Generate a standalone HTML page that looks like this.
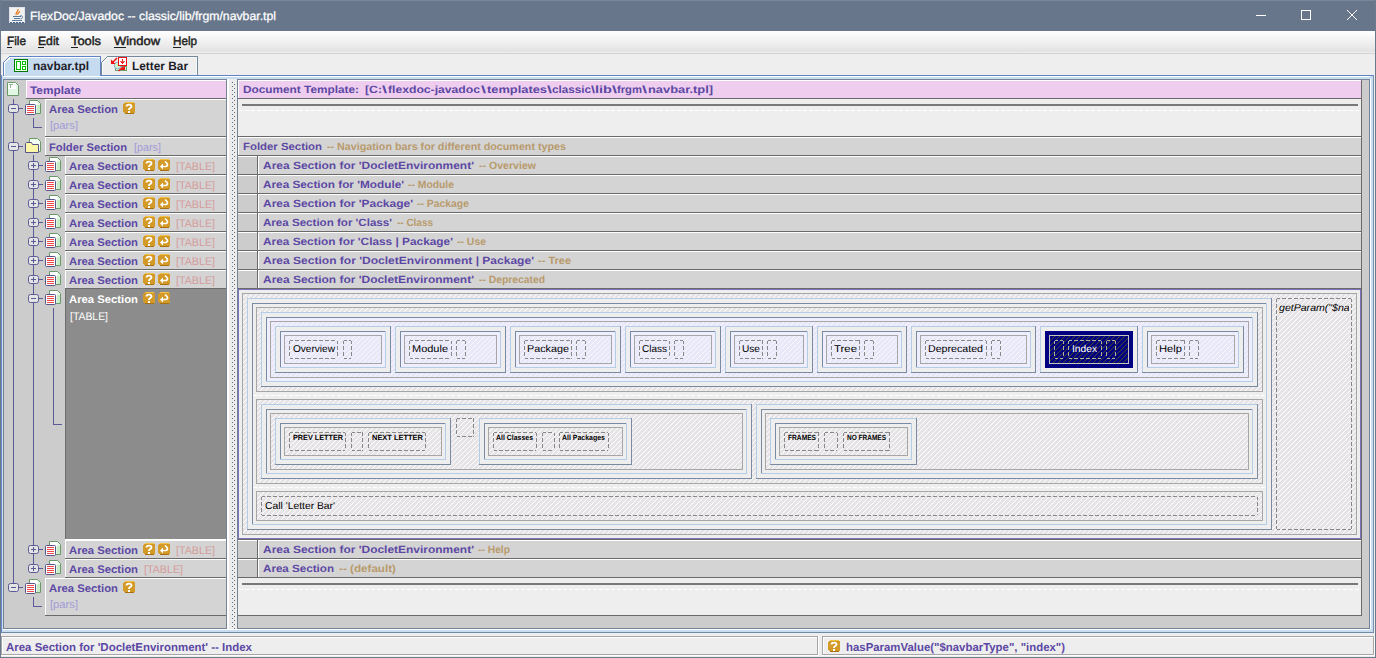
<!DOCTYPE html>
<html><head><meta charset="utf-8"><style>
html,body{margin:0;padding:0;width:1376px;height:658px;overflow:hidden;background:#eeeeee;}
svg{display:block;}
text{shape-rendering:auto;}
</style></head><body>
<svg width="1376" height="658" viewBox="0 0 1376 658" shape-rendering="crispEdges" text-rendering="geometricPrecision">
<rect x="0" y="0" width="1376" height="658" fill="#eeeeee"/>
<rect x="0" y="0" width="1376" height="31" fill="#67768a"/>
<rect x="0" y="0" width="1376" height="1" fill="#7b8798"/>
<rect x="0" y="0" width="1" height="658" fill="#6c7a8e"/>
<rect x="1375" y="0" width="1" height="658" fill="#6c7a8e"/>
<rect x="0" y="657" width="1376" height="1" fill="#6c7a8e"/>
<rect x="10" y="8" width="15" height="15" fill="#f2f2f2"/>
<rect x="9" y="7" width="16" height="1" fill="#dfe3e8"/>
<rect x="9" y="22" width="16" height="1" fill="#dfe3e8"/>
<rect x="9" y="7" width="1" height="16" fill="#dfe3e8"/>
<rect x="24" y="7" width="1" height="16" fill="#dfe3e8"/>
<rect x="10" y="22" width="2" height="1" fill="#4a6490"/>
<rect x="13" y="22" width="2" height="1" fill="#4a6490"/>
<rect x="16" y="22" width="2" height="1" fill="#4a6490"/>
<rect x="19" y="22" width="2" height="1" fill="#4a6490"/>
<rect x="22" y="22" width="2" height="1" fill="#4a6490"/>
<path d="M16.2 15 C15 12.5 18.5 12 18 9.2 M17.6 14.6 C17.4 12.8 20 12.6 19.6 11.2" stroke="#e87818" stroke-width="1.3" fill="none" shape-rendering="auto"/>
<rect x="13" y="16" width="8" height="1" fill="#58789a"/>
<rect x="14" y="18" width="6" height="1" fill="#58789a"/>
<rect x="12" y="20" width="10" height="1" fill="#58789a"/>
<path d="M20.5 15.5 C23.2 15.5 23.2 18.8 20.5 18.8" stroke="#58789a" stroke-width="1" fill="none" shape-rendering="auto"/>
<text x="30" y="20" font-size="12" fill="#ffffff" textLength="246" lengthAdjust="spacingAndGlyphs" font-family="Liberation Sans" stroke="#ffffff" stroke-width="0.25">FlexDoc/Javadoc -- classic/lib/frgm/navbar.tpl</text>
<rect x="1256" y="15" width="10" height="1" fill="#ffffff"/>
<rect x="1301" y="10" width="10" height="1" fill="#ffffff"/>
<rect x="1301" y="19" width="10" height="1" fill="#ffffff"/>
<rect x="1301" y="10" width="1" height="10" fill="#ffffff"/>
<rect x="1310" y="10" width="1" height="10" fill="#ffffff"/>
<path d="M1347 10 L1357 20 M1357 10 L1347 20" stroke="#ffffff" stroke-width="1.1"/>
<defs><linearGradient id="mg" x1="0" y1="0" x2="0" y2="1"><stop offset="0" stop-color="#ffffff"/><stop offset="1" stop-color="#e2e2e2"/></linearGradient><pattern id="hatch" patternUnits="userSpaceOnUse" width="5" height="5"><rect width="5" height="5" fill="#e6e4e6"/><rect x="4" y="1" width="1" height="1" fill="#fff"/><rect x="3" y="2" width="1" height="1" fill="#fff"/><rect x="2" y="3" width="1" height="1" fill="#fff"/><rect x="1" y="4" width="1" height="1" fill="#fff"/><rect x="0" y="0" width="1" height="1" fill="#fff"/></pattern><pattern id="lhatch" patternUnits="userSpaceOnUse" width="5" height="5"><rect width="5" height="5" fill="#e8e8f8"/><rect x="4" y="1" width="1" height="1" fill="#f8f8ff"/><rect x="3" y="2" width="1" height="1" fill="#f8f8ff"/><rect x="2" y="3" width="1" height="1" fill="#f8f8ff"/><rect x="1" y="4" width="1" height="1" fill="#f8f8ff"/><rect x="0" y="0" width="1" height="1" fill="#f8f8ff"/></pattern><pattern id="nhatch" patternUnits="userSpaceOnUse" width="5" height="5"><rect width="5" height="5" fill="#000080"/><rect x="4" y="1" width="1" height="1" fill="#48462e"/><rect x="3" y="2" width="1" height="1" fill="#48462e"/><rect x="2" y="3" width="1" height="1" fill="#48462e"/><rect x="1" y="4" width="1" height="1" fill="#48462e"/><rect x="0" y="0" width="1" height="1" fill="#48462e"/></pattern></defs>
<rect x="1" y="31" width="1374" height="21" fill="url(#mg)"/>
<rect x="1" y="53" width="1374" height="1" fill="#d2d2d2"/>
<text x="7" y="45" font-size="12" fill="#1e1e1e" textLength="19" lengthAdjust="spacingAndGlyphs" font-family="Liberation Sans" stroke="#1e1e1e" stroke-width="0.45">File</text>
<text x="38" y="45" font-size="12" fill="#1e1e1e" textLength="21" lengthAdjust="spacingAndGlyphs" font-family="Liberation Sans" stroke="#1e1e1e" stroke-width="0.45">Edit</text>
<text x="71" y="45" font-size="12" fill="#1e1e1e" textLength="30" lengthAdjust="spacingAndGlyphs" font-family="Liberation Sans" stroke="#1e1e1e" stroke-width="0.45">Tools</text>
<text x="114" y="45" font-size="12" fill="#1e1e1e" textLength="46" lengthAdjust="spacingAndGlyphs" font-family="Liberation Sans" stroke="#1e1e1e" stroke-width="0.45">Window</text>
<text x="173" y="45" font-size="12" fill="#1e1e1e" textLength="24" lengthAdjust="spacingAndGlyphs" font-family="Liberation Sans" stroke="#1e1e1e" stroke-width="0.45">Help</text>
<rect x="7" y="47" width="5" height="1" fill="#1e1e1e"/>
<rect x="38" y="47" width="6" height="1" fill="#1e1e1e"/>
<rect x="71" y="47" width="7" height="1" fill="#1e1e1e"/>
<rect x="114" y="47" width="12" height="1" fill="#1e1e1e"/>
<rect x="173" y="47" width="8" height="1" fill="#1e1e1e"/>
<path d="M3.5 75.5 V62.5 L9.5 56.5 H100.5 V75.5" fill="#c6daf0" stroke="#5f83c4" stroke-width="1"/>
<path d="M4.5 75 V63 L10 57.5 H99.5" fill="none" stroke="#ffffff" stroke-width="1"/>
<path d="M101.5 75 V62.5 L107.5 56.5 H197.5 V75" fill="#eeeeee" stroke="#74879b" stroke-width="1"/>
<path d="M102.5 75 V63 L108 57.5 H196.5 V75" fill="none" stroke="#f8f8f8" stroke-width="1"/>
<text x="33" y="70" font-size="12" fill="#1e1e2a" font-weight="bold" textLength="56" lengthAdjust="spacingAndGlyphs" font-family="Liberation Sans">navbar.tpl</text>
<text x="132" y="70" font-size="12" fill="#1e1e2a" font-weight="bold" textLength="56" lengthAdjust="spacingAndGlyphs" font-family="Liberation Sans">Letter Bar</text>
<rect x="14" y="59" width="14" height="1" fill="#007800"/>
<rect x="14" y="71" width="14" height="1" fill="#007800"/>
<rect x="14" y="59" width="1" height="13" fill="#007800"/>
<rect x="27" y="59" width="1" height="13" fill="#007800"/>
<rect x="15" y="60" width="12" height="11" fill="#f4fff4"/>
<rect x="16" y="61" width="5" height="1" fill="#00c000"/>
<rect x="16" y="69" width="5" height="1" fill="#00c000"/>
<rect x="16" y="61" width="1" height="9" fill="#00c000"/>
<rect x="20" y="61" width="1" height="9" fill="#00c000"/>
<rect x="17" y="62" width="3" height="7" fill="#e8ffe8"/>
<rect x="18" y="63" width="1" height="5" fill="#ffffff"/>
<rect x="22" y="61" width="4" height="1" fill="#00c000"/>
<rect x="22" y="64" width="4" height="1" fill="#00c000"/>
<rect x="22" y="61" width="1" height="4" fill="#00c000"/>
<rect x="25" y="61" width="1" height="4" fill="#00c000"/>
<rect x="23" y="62" width="2" height="2" fill="#ffffff"/>
<rect x="22" y="66" width="4" height="1" fill="#00c000"/>
<rect x="22" y="69" width="4" height="1" fill="#00c000"/>
<rect x="22" y="66" width="1" height="4" fill="#00c000"/>
<rect x="25" y="66" width="1" height="4" fill="#00c000"/>
<rect x="23" y="67" width="2" height="2" fill="#ffffff"/>
<rect x="115" y="66" width="12" height="5" fill="#d8f0d8"/>
<rect x="115" y="66" width="12" height="1" fill="#6aa06a"/>
<rect x="115" y="70" width="12" height="1" fill="#6aa06a"/>
<rect x="115" y="66" width="1" height="5" fill="#6aa06a"/>
<rect x="126" y="66" width="1" height="5" fill="#6aa06a"/>
<circle cx="117.5" cy="65.5" r="3.3" fill="#c8f8c8" stroke="#8890d0" stroke-width="0.8" shape-rendering="auto"/>
<rect x="118" y="57" width="9" height="9" fill="#ee1010"/>
<rect x="119" y="58" width="7" height="7" fill="#ffffff"/>
<rect x="122" y="59" width="1" height="5" fill="#ee1010"/>
<rect x="121" y="62" width="3" height="1" fill="#ee1010"/>
<rect x="120" y="61" width="5" height="1" fill="#f06060"/>
<path d="M117 58 L112.5 62.5" stroke="#ee1010" stroke-width="1.4" fill="none" shape-rendering="auto"/>
<path d="M111 59.5 V64 H115.5 Z" fill="#ee1010" shape-rendering="auto"/>
<path d="M118.5 71 L123 67" stroke="#ee1010" stroke-width="1.4" fill="none" shape-rendering="auto"/>
<path d="M125 65.5 V70 H120.5 Z" fill="#ee1010" shape-rendering="auto"/>
<rect x="100" y="75" width="1274" height="1" fill="#5f83c4"/>
<rect x="1" y="75" width="1" height="558" fill="#6a8cc8"/>
<rect x="1373" y="75" width="1" height="558" fill="#7a90aa"/>
<rect x="1" y="632" width="1373" height="1" fill="#7088a8"/>
<rect x="2" y="76" width="1371" height="1" fill="#ffffff"/>
<rect x="2" y="77" width="1371" height="2" fill="#c8dcf2"/>
<rect x="2" y="76" width="1" height="556" fill="#c8dcf2"/>
<rect x="1370" y="76" width="3" height="556" fill="#c8dcf2"/>
<rect x="1370" y="79" width="1" height="550" fill="#ffffff"/>
<rect x="2" y="629" width="1371" height="3" fill="#c8dcf2"/>
<rect x="3" y="629" width="1367" height="1" fill="#ffffff"/>
<rect x="3" y="79" width="1367" height="1" fill="#748494"/>
<rect x="3" y="628" width="1367" height="1" fill="#748494"/>
<rect x="3" y="79" width="1" height="550" fill="#748494"/>
<rect x="1369" y="79" width="1" height="550" fill="#748494"/>
<rect x="4" y="80" width="222" height="548" fill="#cccccc"/>
<rect x="226" y="79" width="1" height="550" fill="#748494"/>
<rect x="227" y="79" width="10" height="550" fill="#ececec"/>
<rect x="227" y="79" width="2" height="550" fill="#ffffff"/>
<path d="M232 82h1v1h-1z M234 84h1v1h-1z M232 86h1v1h-1z M234 88h1v1h-1z M232 90h1v1h-1z M234 92h1v1h-1z M232 94h1v1h-1z M234 96h1v1h-1z M232 98h1v1h-1z M234 100h1v1h-1z M232 102h1v1h-1z M234 104h1v1h-1z M232 106h1v1h-1z M234 108h1v1h-1z M232 110h1v1h-1z M234 112h1v1h-1z M232 114h1v1h-1z M234 116h1v1h-1z M232 118h1v1h-1z M234 120h1v1h-1z M232 122h1v1h-1z M234 124h1v1h-1z M232 126h1v1h-1z M234 128h1v1h-1z M232 130h1v1h-1z M234 132h1v1h-1z M232 134h1v1h-1z M234 136h1v1h-1z M232 138h1v1h-1z M234 140h1v1h-1z M232 142h1v1h-1z M234 144h1v1h-1z M232 146h1v1h-1z M234 148h1v1h-1z M232 150h1v1h-1z M234 152h1v1h-1z M232 154h1v1h-1z M234 156h1v1h-1z M232 158h1v1h-1z M234 160h1v1h-1z M232 162h1v1h-1z M234 164h1v1h-1z M232 166h1v1h-1z M234 168h1v1h-1z M232 170h1v1h-1z M234 172h1v1h-1z M232 174h1v1h-1z M234 176h1v1h-1z M232 178h1v1h-1z M234 180h1v1h-1z M232 182h1v1h-1z M234 184h1v1h-1z M232 186h1v1h-1z M234 188h1v1h-1z M232 190h1v1h-1z M234 192h1v1h-1z M232 194h1v1h-1z M234 196h1v1h-1z M232 198h1v1h-1z M234 200h1v1h-1z M232 202h1v1h-1z M234 204h1v1h-1z M232 206h1v1h-1z M234 208h1v1h-1z M232 210h1v1h-1z M234 212h1v1h-1z M232 214h1v1h-1z M234 216h1v1h-1z M232 218h1v1h-1z M234 220h1v1h-1z M232 222h1v1h-1z M234 224h1v1h-1z M232 226h1v1h-1z M234 228h1v1h-1z M232 230h1v1h-1z M234 232h1v1h-1z M232 234h1v1h-1z M234 236h1v1h-1z M232 238h1v1h-1z M234 240h1v1h-1z M232 242h1v1h-1z M234 244h1v1h-1z M232 246h1v1h-1z M234 248h1v1h-1z M232 250h1v1h-1z M234 252h1v1h-1z M232 254h1v1h-1z M234 256h1v1h-1z M232 258h1v1h-1z M234 260h1v1h-1z M232 262h1v1h-1z M234 264h1v1h-1z M232 266h1v1h-1z M234 268h1v1h-1z M232 270h1v1h-1z M234 272h1v1h-1z M232 274h1v1h-1z M234 276h1v1h-1z M232 278h1v1h-1z M234 280h1v1h-1z M232 282h1v1h-1z M234 284h1v1h-1z M232 286h1v1h-1z M234 288h1v1h-1z M232 290h1v1h-1z M234 292h1v1h-1z M232 294h1v1h-1z M234 296h1v1h-1z M232 298h1v1h-1z M234 300h1v1h-1z M232 302h1v1h-1z M234 304h1v1h-1z M232 306h1v1h-1z M234 308h1v1h-1z M232 310h1v1h-1z M234 312h1v1h-1z M232 314h1v1h-1z M234 316h1v1h-1z M232 318h1v1h-1z M234 320h1v1h-1z M232 322h1v1h-1z M234 324h1v1h-1z M232 326h1v1h-1z M234 328h1v1h-1z M232 330h1v1h-1z M234 332h1v1h-1z M232 334h1v1h-1z M234 336h1v1h-1z M232 338h1v1h-1z M234 340h1v1h-1z M232 342h1v1h-1z M234 344h1v1h-1z M232 346h1v1h-1z M234 348h1v1h-1z M232 350h1v1h-1z M234 352h1v1h-1z M232 354h1v1h-1z M234 356h1v1h-1z M232 358h1v1h-1z M234 360h1v1h-1z M232 362h1v1h-1z M234 364h1v1h-1z M232 366h1v1h-1z M234 368h1v1h-1z M232 370h1v1h-1z M234 372h1v1h-1z M232 374h1v1h-1z M234 376h1v1h-1z M232 378h1v1h-1z M234 380h1v1h-1z M232 382h1v1h-1z M234 384h1v1h-1z M232 386h1v1h-1z M234 388h1v1h-1z M232 390h1v1h-1z M234 392h1v1h-1z M232 394h1v1h-1z M234 396h1v1h-1z M232 398h1v1h-1z M234 400h1v1h-1z M232 402h1v1h-1z M234 404h1v1h-1z M232 406h1v1h-1z M234 408h1v1h-1z M232 410h1v1h-1z M234 412h1v1h-1z M232 414h1v1h-1z M234 416h1v1h-1z M232 418h1v1h-1z M234 420h1v1h-1z M232 422h1v1h-1z M234 424h1v1h-1z M232 426h1v1h-1z M234 428h1v1h-1z M232 430h1v1h-1z M234 432h1v1h-1z M232 434h1v1h-1z M234 436h1v1h-1z M232 438h1v1h-1z M234 440h1v1h-1z M232 442h1v1h-1z M234 444h1v1h-1z M232 446h1v1h-1z M234 448h1v1h-1z M232 450h1v1h-1z M234 452h1v1h-1z M232 454h1v1h-1z M234 456h1v1h-1z M232 458h1v1h-1z M234 460h1v1h-1z M232 462h1v1h-1z M234 464h1v1h-1z M232 466h1v1h-1z M234 468h1v1h-1z M232 470h1v1h-1z M234 472h1v1h-1z M232 474h1v1h-1z M234 476h1v1h-1z M232 478h1v1h-1z M234 480h1v1h-1z M232 482h1v1h-1z M234 484h1v1h-1z M232 486h1v1h-1z M234 488h1v1h-1z M232 490h1v1h-1z M234 492h1v1h-1z M232 494h1v1h-1z M234 496h1v1h-1z M232 498h1v1h-1z M234 500h1v1h-1z M232 502h1v1h-1z M234 504h1v1h-1z M232 506h1v1h-1z M234 508h1v1h-1z M232 510h1v1h-1z M234 512h1v1h-1z M232 514h1v1h-1z M234 516h1v1h-1z M232 518h1v1h-1z M234 520h1v1h-1z M232 522h1v1h-1z M234 524h1v1h-1z M232 526h1v1h-1z M234 528h1v1h-1z M232 530h1v1h-1z M234 532h1v1h-1z M232 534h1v1h-1z M234 536h1v1h-1z M232 538h1v1h-1z M234 540h1v1h-1z M232 542h1v1h-1z M234 544h1v1h-1z M232 546h1v1h-1z M234 548h1v1h-1z M232 550h1v1h-1z M234 552h1v1h-1z M232 554h1v1h-1z M234 556h1v1h-1z M232 558h1v1h-1z M234 560h1v1h-1z M232 562h1v1h-1z M234 564h1v1h-1z M232 566h1v1h-1z M234 568h1v1h-1z M232 570h1v1h-1z M234 572h1v1h-1z M232 574h1v1h-1z M234 576h1v1h-1z M232 578h1v1h-1z M234 580h1v1h-1z M232 582h1v1h-1z M234 584h1v1h-1z M232 586h1v1h-1z M234 588h1v1h-1z M232 590h1v1h-1z M234 592h1v1h-1z M232 594h1v1h-1z M234 596h1v1h-1z M232 598h1v1h-1z M234 600h1v1h-1z M232 602h1v1h-1z M234 604h1v1h-1z M232 606h1v1h-1z M234 608h1v1h-1z M232 610h1v1h-1z M234 612h1v1h-1z M232 614h1v1h-1z M234 616h1v1h-1z M232 618h1v1h-1z M234 620h1v1h-1z M232 622h1v1h-1z M234 624h1v1h-1z M232 626h1v1h-1z M234 628h1v1h-1z" fill="#5e6a7a"/>
<rect x="237" y="79" width="1" height="550" fill="#748494"/>
<rect x="238" y="80" width="1131" height="548" fill="#cccccc"/>
<rect x="13" y="99" width="1" height="484" fill="#5a5a96"/>
<rect x="33" y="155" width="1" height="418" fill="#5a5a96"/>
<rect x="53" y="308" width="1" height="117" fill="#5a5a96"/>
<rect x="53" y="424" width="9" height="1" fill="#5a5a96"/>
<rect x="33" y="118" width="1" height="10" fill="#5a5a96"/>
<rect x="33" y="127" width="9" height="1" fill="#5a5a96"/>
<rect x="33" y="597" width="1" height="10" fill="#5a5a96"/>
<rect x="33" y="606" width="9" height="1" fill="#5a5a96"/>
<rect x="26" y="80" width="200" height="19" fill="#eecdee"/>
<rect x="26" y="80" width="200" height="1" fill="#ffffff"/>
<rect x="26" y="80" width="1" height="19" fill="#ffffff"/>
<rect x="26" y="98" width="200" height="1" fill="#6a6a6a"/>
<path d="M7.5 82.5 H15.5 L18.5 85.5 V95.5 H7.5 Z" fill="#e4f6e4" stroke="#6a9a6a" stroke-width="1" shape-rendering="auto"/>
<rect x="8" y="83" width="8" height="6" fill="#ffffff"/>
<rect x="9" y="84" width="4" height="1" fill="#90b890"/>
<rect x="10" y="84" width="1" height="4" fill="#90b890"/>
<text x="30" y="94" font-size="11" fill="#5c48a4" font-weight="bold" textLength="51" lengthAdjust="spacingAndGlyphs" font-family="Liberation Sans">Template</text>
<rect x="45" y="99" width="181" height="38" fill="#d4d4d4"/>
<rect x="45" y="99" width="181" height="1" fill="#ffffff"/>
<rect x="45" y="99" width="1" height="38" fill="#ffffff"/>
<rect x="45" y="136" width="181" height="1" fill="#6a6a6a"/>
<rect x="8.5" y="104.5" width="10" height="8" rx="2" fill="#e4e4e4" stroke="#5a5a96" stroke-width="1" shape-rendering="auto"/>
<rect x="11" y="108" width="5" height="1" fill="#5a5a96"/>
<rect x="19" y="108" width="4" height="1" fill="#5a5a96"/>
<path d="M29.5 100.5 H37.5 L40.5 103.5 V113.5 H29.5 Z" fill="#e8f8e8" stroke="#6a9a6a" stroke-width="1" shape-rendering="auto"/>
<rect x="30" y="101" width="7" height="4" fill="#ffffff"/>
<rect x="37" y="105" width="3" height="8" fill="#c8ecc8"/>
<rect x="25.5" y="104.5" width="10" height="10" rx="1" fill="#ffffff" stroke="#55558a" stroke-width="1" shape-rendering="auto"/>
<rect x="27" y="106" width="7" height="1" fill="#f04848"/>
<rect x="27" y="108" width="7" height="1" fill="#f04848"/>
<rect x="27" y="110" width="7" height="1" fill="#f04848"/>
<rect x="27" y="112" width="7" height="1" fill="#f04848"/>
<text x="49" y="113" font-size="11" fill="#5c48a4" font-weight="bold" textLength="69" lengthAdjust="spacingAndGlyphs" font-family="Liberation Sans">Area Section</text>
<path d="M125 102 H133 L135 104 V112 L133 114 H125 L123 112 V104 Z" fill="#d49a28"/>
<path d="M125 102 H133 L134 103 H124 Z" fill="#f0c040"/>
<path d="M124 113 H134 L133 114 H125 Z" fill="#a87010"/>
<path d="M126.5 106.5 C126.5 104 131.5 104 131.5 106.5 C131.5 108 129 108 129 109.5 V110" stroke="#ffffff" stroke-width="1.8" fill="none" shape-rendering="auto"/>
<rect x="128" y="111" width="2" height="2" fill="#ffffff"/>
<text x="50" y="129" font-size="11" fill="#a29ad8" textLength="28" lengthAdjust="spacingAndGlyphs" font-family="Liberation Sans">[pars]</text>
<rect x="45" y="137" width="181" height="19" fill="#d4d4d4"/>
<rect x="45" y="137" width="181" height="1" fill="#ffffff"/>
<rect x="45" y="137" width="1" height="19" fill="#ffffff"/>
<rect x="45" y="155" width="181" height="1" fill="#6a6a6a"/>
<rect x="8.5" y="142.5" width="10" height="8" rx="2" fill="#e4e4e4" stroke="#5a5a96" stroke-width="1" shape-rendering="auto"/>
<rect x="11" y="146" width="5" height="1" fill="#5a5a96"/>
<rect x="19" y="146" width="4" height="1" fill="#5a5a96"/>
<path d="M29.5 138.5 H37.5 L40.5 141.5 V151.5 H29.5 Z" fill="#f4fff4" stroke="#6a9a6a" stroke-width="1" shape-rendering="auto"/>
<path d="M25.5 152.5 V143.5 L26.5 142.5 H31.5 L32.5 144.5 H38.5 V152.5 Z" fill="#fbf6a8" stroke="#55558a" stroke-width="1" shape-rendering="auto"/>
<text x="49" y="151" font-size="11" fill="#5c48a4" font-weight="bold" textLength="78" lengthAdjust="spacingAndGlyphs" font-family="Liberation Sans">Folder Section</text>
<text x="134" y="151" font-size="11" fill="#a29ad8" textLength="27" lengthAdjust="spacingAndGlyphs" font-family="Liberation Sans">[pars]</text>
<rect x="65" y="156" width="161" height="19" fill="#d4d4d4"/>
<rect x="65" y="156" width="161" height="1" fill="#ffffff"/>
<rect x="65" y="156" width="1" height="19" fill="#ffffff"/>
<rect x="65" y="174" width="161" height="1" fill="#6a6a6a"/>
<rect x="28.5" y="161.5" width="10" height="8" rx="2" fill="#e4e4e4" stroke="#5a5a96" stroke-width="1" shape-rendering="auto"/>
<rect x="31" y="165" width="5" height="1" fill="#5a5a96"/>
<rect x="33" y="163" width="1" height="5" fill="#5a5a96"/>
<rect x="39" y="165" width="4" height="1" fill="#5a5a96"/>
<path d="M49.5 157.5 H57.5 L60.5 160.5 V170.5 H49.5 Z" fill="#e8f8e8" stroke="#6a9a6a" stroke-width="1" shape-rendering="auto"/>
<rect x="50" y="158" width="7" height="4" fill="#ffffff"/>
<rect x="57" y="162" width="3" height="8" fill="#c8ecc8"/>
<rect x="45.5" y="161.5" width="10" height="10" rx="1" fill="#ffffff" stroke="#55558a" stroke-width="1" shape-rendering="auto"/>
<rect x="47" y="163" width="7" height="1" fill="#f04848"/>
<rect x="47" y="165" width="7" height="1" fill="#f04848"/>
<rect x="47" y="167" width="7" height="1" fill="#f04848"/>
<rect x="47" y="169" width="7" height="1" fill="#f04848"/>
<text x="69" y="170" font-size="11" fill="#5c48a4" font-weight="bold" textLength="69" lengthAdjust="spacingAndGlyphs" font-family="Liberation Sans">Area Section</text>
<path d="M145 159 H153 L155 161 V169 L153 171 H145 L143 169 V161 Z" fill="#d49a28"/>
<path d="M145 159 H153 L154 160 H144 Z" fill="#f0c040"/>
<path d="M144 170 H154 L153 171 H145 Z" fill="#a87010"/>
<path d="M146.5 163.5 C146.5 161 151.5 161 151.5 163.5 C151.5 165 149 165 149 166.5 V167" stroke="#ffffff" stroke-width="1.8" fill="none" shape-rendering="auto"/>
<rect x="148" y="168" width="2" height="2" fill="#ffffff"/>
<path d="M160 159 H168 L170 161 V169 L168 171 H160 L158 169 V161 Z" fill="#d49a28"/>
<path d="M160 159 H168 L169 160 H159 Z" fill="#f0c040"/>
<path d="M159 170 H169 L168 171 H160 Z" fill="#a87010"/>
<path d="M165 161.5 L167 163.5 C168 164.5 167.5 166.5 165.5 166.5 H161" stroke="#ffffff" stroke-width="1.7" fill="none" shape-rendering="auto"/>
<path d="M160 166.5 L163 163.5 V169.5 Z" fill="#ffffff" shape-rendering="auto"/>
<text x="176" y="170" font-size="11" fill="#d49c9c" textLength="39" lengthAdjust="spacingAndGlyphs" font-family="Liberation Sans">[TABLE]</text>
<rect x="65" y="175" width="161" height="19" fill="#d4d4d4"/>
<rect x="65" y="175" width="161" height="1" fill="#ffffff"/>
<rect x="65" y="175" width="1" height="19" fill="#ffffff"/>
<rect x="65" y="193" width="161" height="1" fill="#6a6a6a"/>
<rect x="28.5" y="180.5" width="10" height="8" rx="2" fill="#e4e4e4" stroke="#5a5a96" stroke-width="1" shape-rendering="auto"/>
<rect x="31" y="184" width="5" height="1" fill="#5a5a96"/>
<rect x="33" y="182" width="1" height="5" fill="#5a5a96"/>
<rect x="39" y="184" width="4" height="1" fill="#5a5a96"/>
<path d="M49.5 176.5 H57.5 L60.5 179.5 V189.5 H49.5 Z" fill="#e8f8e8" stroke="#6a9a6a" stroke-width="1" shape-rendering="auto"/>
<rect x="50" y="177" width="7" height="4" fill="#ffffff"/>
<rect x="57" y="181" width="3" height="8" fill="#c8ecc8"/>
<rect x="45.5" y="180.5" width="10" height="10" rx="1" fill="#ffffff" stroke="#55558a" stroke-width="1" shape-rendering="auto"/>
<rect x="47" y="182" width="7" height="1" fill="#f04848"/>
<rect x="47" y="184" width="7" height="1" fill="#f04848"/>
<rect x="47" y="186" width="7" height="1" fill="#f04848"/>
<rect x="47" y="188" width="7" height="1" fill="#f04848"/>
<text x="69" y="189" font-size="11" fill="#5c48a4" font-weight="bold" textLength="69" lengthAdjust="spacingAndGlyphs" font-family="Liberation Sans">Area Section</text>
<path d="M145 178 H153 L155 180 V188 L153 190 H145 L143 188 V180 Z" fill="#d49a28"/>
<path d="M145 178 H153 L154 179 H144 Z" fill="#f0c040"/>
<path d="M144 189 H154 L153 190 H145 Z" fill="#a87010"/>
<path d="M146.5 182.5 C146.5 180 151.5 180 151.5 182.5 C151.5 184 149 184 149 185.5 V186" stroke="#ffffff" stroke-width="1.8" fill="none" shape-rendering="auto"/>
<rect x="148" y="187" width="2" height="2" fill="#ffffff"/>
<path d="M160 178 H168 L170 180 V188 L168 190 H160 L158 188 V180 Z" fill="#d49a28"/>
<path d="M160 178 H168 L169 179 H159 Z" fill="#f0c040"/>
<path d="M159 189 H169 L168 190 H160 Z" fill="#a87010"/>
<path d="M165 180.5 L167 182.5 C168 183.5 167.5 185.5 165.5 185.5 H161" stroke="#ffffff" stroke-width="1.7" fill="none" shape-rendering="auto"/>
<path d="M160 185.5 L163 182.5 V188.5 Z" fill="#ffffff" shape-rendering="auto"/>
<text x="176" y="189" font-size="11" fill="#d49c9c" textLength="39" lengthAdjust="spacingAndGlyphs" font-family="Liberation Sans">[TABLE]</text>
<rect x="65" y="194" width="161" height="19" fill="#d4d4d4"/>
<rect x="65" y="194" width="161" height="1" fill="#ffffff"/>
<rect x="65" y="194" width="1" height="19" fill="#ffffff"/>
<rect x="65" y="212" width="161" height="1" fill="#6a6a6a"/>
<rect x="28.5" y="199.5" width="10" height="8" rx="2" fill="#e4e4e4" stroke="#5a5a96" stroke-width="1" shape-rendering="auto"/>
<rect x="31" y="203" width="5" height="1" fill="#5a5a96"/>
<rect x="33" y="201" width="1" height="5" fill="#5a5a96"/>
<rect x="39" y="203" width="4" height="1" fill="#5a5a96"/>
<path d="M49.5 195.5 H57.5 L60.5 198.5 V208.5 H49.5 Z" fill="#e8f8e8" stroke="#6a9a6a" stroke-width="1" shape-rendering="auto"/>
<rect x="50" y="196" width="7" height="4" fill="#ffffff"/>
<rect x="57" y="200" width="3" height="8" fill="#c8ecc8"/>
<rect x="45.5" y="199.5" width="10" height="10" rx="1" fill="#ffffff" stroke="#55558a" stroke-width="1" shape-rendering="auto"/>
<rect x="47" y="201" width="7" height="1" fill="#f04848"/>
<rect x="47" y="203" width="7" height="1" fill="#f04848"/>
<rect x="47" y="205" width="7" height="1" fill="#f04848"/>
<rect x="47" y="207" width="7" height="1" fill="#f04848"/>
<text x="69" y="208" font-size="11" fill="#5c48a4" font-weight="bold" textLength="69" lengthAdjust="spacingAndGlyphs" font-family="Liberation Sans">Area Section</text>
<path d="M145 197 H153 L155 199 V207 L153 209 H145 L143 207 V199 Z" fill="#d49a28"/>
<path d="M145 197 H153 L154 198 H144 Z" fill="#f0c040"/>
<path d="M144 208 H154 L153 209 H145 Z" fill="#a87010"/>
<path d="M146.5 201.5 C146.5 199 151.5 199 151.5 201.5 C151.5 203 149 203 149 204.5 V205" stroke="#ffffff" stroke-width="1.8" fill="none" shape-rendering="auto"/>
<rect x="148" y="206" width="2" height="2" fill="#ffffff"/>
<path d="M160 197 H168 L170 199 V207 L168 209 H160 L158 207 V199 Z" fill="#d49a28"/>
<path d="M160 197 H168 L169 198 H159 Z" fill="#f0c040"/>
<path d="M159 208 H169 L168 209 H160 Z" fill="#a87010"/>
<path d="M165 199.5 L167 201.5 C168 202.5 167.5 204.5 165.5 204.5 H161" stroke="#ffffff" stroke-width="1.7" fill="none" shape-rendering="auto"/>
<path d="M160 204.5 L163 201.5 V207.5 Z" fill="#ffffff" shape-rendering="auto"/>
<text x="176" y="208" font-size="11" fill="#d49c9c" textLength="39" lengthAdjust="spacingAndGlyphs" font-family="Liberation Sans">[TABLE]</text>
<rect x="65" y="213" width="161" height="19" fill="#d4d4d4"/>
<rect x="65" y="213" width="161" height="1" fill="#ffffff"/>
<rect x="65" y="213" width="1" height="19" fill="#ffffff"/>
<rect x="65" y="231" width="161" height="1" fill="#6a6a6a"/>
<rect x="28.5" y="218.5" width="10" height="8" rx="2" fill="#e4e4e4" stroke="#5a5a96" stroke-width="1" shape-rendering="auto"/>
<rect x="31" y="222" width="5" height="1" fill="#5a5a96"/>
<rect x="33" y="220" width="1" height="5" fill="#5a5a96"/>
<rect x="39" y="222" width="4" height="1" fill="#5a5a96"/>
<path d="M49.5 214.5 H57.5 L60.5 217.5 V227.5 H49.5 Z" fill="#e8f8e8" stroke="#6a9a6a" stroke-width="1" shape-rendering="auto"/>
<rect x="50" y="215" width="7" height="4" fill="#ffffff"/>
<rect x="57" y="219" width="3" height="8" fill="#c8ecc8"/>
<rect x="45.5" y="218.5" width="10" height="10" rx="1" fill="#ffffff" stroke="#55558a" stroke-width="1" shape-rendering="auto"/>
<rect x="47" y="220" width="7" height="1" fill="#f04848"/>
<rect x="47" y="222" width="7" height="1" fill="#f04848"/>
<rect x="47" y="224" width="7" height="1" fill="#f04848"/>
<rect x="47" y="226" width="7" height="1" fill="#f04848"/>
<text x="69" y="227" font-size="11" fill="#5c48a4" font-weight="bold" textLength="69" lengthAdjust="spacingAndGlyphs" font-family="Liberation Sans">Area Section</text>
<path d="M145 216 H153 L155 218 V226 L153 228 H145 L143 226 V218 Z" fill="#d49a28"/>
<path d="M145 216 H153 L154 217 H144 Z" fill="#f0c040"/>
<path d="M144 227 H154 L153 228 H145 Z" fill="#a87010"/>
<path d="M146.5 220.5 C146.5 218 151.5 218 151.5 220.5 C151.5 222 149 222 149 223.5 V224" stroke="#ffffff" stroke-width="1.8" fill="none" shape-rendering="auto"/>
<rect x="148" y="225" width="2" height="2" fill="#ffffff"/>
<path d="M160 216 H168 L170 218 V226 L168 228 H160 L158 226 V218 Z" fill="#d49a28"/>
<path d="M160 216 H168 L169 217 H159 Z" fill="#f0c040"/>
<path d="M159 227 H169 L168 228 H160 Z" fill="#a87010"/>
<path d="M165 218.5 L167 220.5 C168 221.5 167.5 223.5 165.5 223.5 H161" stroke="#ffffff" stroke-width="1.7" fill="none" shape-rendering="auto"/>
<path d="M160 223.5 L163 220.5 V226.5 Z" fill="#ffffff" shape-rendering="auto"/>
<text x="176" y="227" font-size="11" fill="#d49c9c" textLength="39" lengthAdjust="spacingAndGlyphs" font-family="Liberation Sans">[TABLE]</text>
<rect x="65" y="232" width="161" height="19" fill="#d4d4d4"/>
<rect x="65" y="232" width="161" height="1" fill="#ffffff"/>
<rect x="65" y="232" width="1" height="19" fill="#ffffff"/>
<rect x="65" y="250" width="161" height="1" fill="#6a6a6a"/>
<rect x="28.5" y="237.5" width="10" height="8" rx="2" fill="#e4e4e4" stroke="#5a5a96" stroke-width="1" shape-rendering="auto"/>
<rect x="31" y="241" width="5" height="1" fill="#5a5a96"/>
<rect x="33" y="239" width="1" height="5" fill="#5a5a96"/>
<rect x="39" y="241" width="4" height="1" fill="#5a5a96"/>
<path d="M49.5 233.5 H57.5 L60.5 236.5 V246.5 H49.5 Z" fill="#e8f8e8" stroke="#6a9a6a" stroke-width="1" shape-rendering="auto"/>
<rect x="50" y="234" width="7" height="4" fill="#ffffff"/>
<rect x="57" y="238" width="3" height="8" fill="#c8ecc8"/>
<rect x="45.5" y="237.5" width="10" height="10" rx="1" fill="#ffffff" stroke="#55558a" stroke-width="1" shape-rendering="auto"/>
<rect x="47" y="239" width="7" height="1" fill="#f04848"/>
<rect x="47" y="241" width="7" height="1" fill="#f04848"/>
<rect x="47" y="243" width="7" height="1" fill="#f04848"/>
<rect x="47" y="245" width="7" height="1" fill="#f04848"/>
<text x="69" y="246" font-size="11" fill="#5c48a4" font-weight="bold" textLength="69" lengthAdjust="spacingAndGlyphs" font-family="Liberation Sans">Area Section</text>
<path d="M145 235 H153 L155 237 V245 L153 247 H145 L143 245 V237 Z" fill="#d49a28"/>
<path d="M145 235 H153 L154 236 H144 Z" fill="#f0c040"/>
<path d="M144 246 H154 L153 247 H145 Z" fill="#a87010"/>
<path d="M146.5 239.5 C146.5 237 151.5 237 151.5 239.5 C151.5 241 149 241 149 242.5 V243" stroke="#ffffff" stroke-width="1.8" fill="none" shape-rendering="auto"/>
<rect x="148" y="244" width="2" height="2" fill="#ffffff"/>
<path d="M160 235 H168 L170 237 V245 L168 247 H160 L158 245 V237 Z" fill="#d49a28"/>
<path d="M160 235 H168 L169 236 H159 Z" fill="#f0c040"/>
<path d="M159 246 H169 L168 247 H160 Z" fill="#a87010"/>
<path d="M165 237.5 L167 239.5 C168 240.5 167.5 242.5 165.5 242.5 H161" stroke="#ffffff" stroke-width="1.7" fill="none" shape-rendering="auto"/>
<path d="M160 242.5 L163 239.5 V245.5 Z" fill="#ffffff" shape-rendering="auto"/>
<text x="176" y="246" font-size="11" fill="#d49c9c" textLength="39" lengthAdjust="spacingAndGlyphs" font-family="Liberation Sans">[TABLE]</text>
<rect x="65" y="251" width="161" height="19" fill="#d4d4d4"/>
<rect x="65" y="251" width="161" height="1" fill="#ffffff"/>
<rect x="65" y="251" width="1" height="19" fill="#ffffff"/>
<rect x="65" y="269" width="161" height="1" fill="#6a6a6a"/>
<rect x="28.5" y="256.5" width="10" height="8" rx="2" fill="#e4e4e4" stroke="#5a5a96" stroke-width="1" shape-rendering="auto"/>
<rect x="31" y="260" width="5" height="1" fill="#5a5a96"/>
<rect x="33" y="258" width="1" height="5" fill="#5a5a96"/>
<rect x="39" y="260" width="4" height="1" fill="#5a5a96"/>
<path d="M49.5 252.5 H57.5 L60.5 255.5 V265.5 H49.5 Z" fill="#e8f8e8" stroke="#6a9a6a" stroke-width="1" shape-rendering="auto"/>
<rect x="50" y="253" width="7" height="4" fill="#ffffff"/>
<rect x="57" y="257" width="3" height="8" fill="#c8ecc8"/>
<rect x="45.5" y="256.5" width="10" height="10" rx="1" fill="#ffffff" stroke="#55558a" stroke-width="1" shape-rendering="auto"/>
<rect x="47" y="258" width="7" height="1" fill="#f04848"/>
<rect x="47" y="260" width="7" height="1" fill="#f04848"/>
<rect x="47" y="262" width="7" height="1" fill="#f04848"/>
<rect x="47" y="264" width="7" height="1" fill="#f04848"/>
<text x="69" y="265" font-size="11" fill="#5c48a4" font-weight="bold" textLength="69" lengthAdjust="spacingAndGlyphs" font-family="Liberation Sans">Area Section</text>
<path d="M145 254 H153 L155 256 V264 L153 266 H145 L143 264 V256 Z" fill="#d49a28"/>
<path d="M145 254 H153 L154 255 H144 Z" fill="#f0c040"/>
<path d="M144 265 H154 L153 266 H145 Z" fill="#a87010"/>
<path d="M146.5 258.5 C146.5 256 151.5 256 151.5 258.5 C151.5 260 149 260 149 261.5 V262" stroke="#ffffff" stroke-width="1.8" fill="none" shape-rendering="auto"/>
<rect x="148" y="263" width="2" height="2" fill="#ffffff"/>
<path d="M160 254 H168 L170 256 V264 L168 266 H160 L158 264 V256 Z" fill="#d49a28"/>
<path d="M160 254 H168 L169 255 H159 Z" fill="#f0c040"/>
<path d="M159 265 H169 L168 266 H160 Z" fill="#a87010"/>
<path d="M165 256.5 L167 258.5 C168 259.5 167.5 261.5 165.5 261.5 H161" stroke="#ffffff" stroke-width="1.7" fill="none" shape-rendering="auto"/>
<path d="M160 261.5 L163 258.5 V264.5 Z" fill="#ffffff" shape-rendering="auto"/>
<text x="176" y="265" font-size="11" fill="#d49c9c" textLength="39" lengthAdjust="spacingAndGlyphs" font-family="Liberation Sans">[TABLE]</text>
<rect x="65" y="270" width="161" height="19" fill="#d4d4d4"/>
<rect x="65" y="270" width="161" height="1" fill="#ffffff"/>
<rect x="65" y="270" width="1" height="19" fill="#ffffff"/>
<rect x="65" y="288" width="161" height="1" fill="#6a6a6a"/>
<rect x="28.5" y="275.5" width="10" height="8" rx="2" fill="#e4e4e4" stroke="#5a5a96" stroke-width="1" shape-rendering="auto"/>
<rect x="31" y="279" width="5" height="1" fill="#5a5a96"/>
<rect x="33" y="277" width="1" height="5" fill="#5a5a96"/>
<rect x="39" y="279" width="4" height="1" fill="#5a5a96"/>
<path d="M49.5 271.5 H57.5 L60.5 274.5 V284.5 H49.5 Z" fill="#e8f8e8" stroke="#6a9a6a" stroke-width="1" shape-rendering="auto"/>
<rect x="50" y="272" width="7" height="4" fill="#ffffff"/>
<rect x="57" y="276" width="3" height="8" fill="#c8ecc8"/>
<rect x="45.5" y="275.5" width="10" height="10" rx="1" fill="#ffffff" stroke="#55558a" stroke-width="1" shape-rendering="auto"/>
<rect x="47" y="277" width="7" height="1" fill="#f04848"/>
<rect x="47" y="279" width="7" height="1" fill="#f04848"/>
<rect x="47" y="281" width="7" height="1" fill="#f04848"/>
<rect x="47" y="283" width="7" height="1" fill="#f04848"/>
<text x="69" y="284" font-size="11" fill="#5c48a4" font-weight="bold" textLength="69" lengthAdjust="spacingAndGlyphs" font-family="Liberation Sans">Area Section</text>
<path d="M145 273 H153 L155 275 V283 L153 285 H145 L143 283 V275 Z" fill="#d49a28"/>
<path d="M145 273 H153 L154 274 H144 Z" fill="#f0c040"/>
<path d="M144 284 H154 L153 285 H145 Z" fill="#a87010"/>
<path d="M146.5 277.5 C146.5 275 151.5 275 151.5 277.5 C151.5 279 149 279 149 280.5 V281" stroke="#ffffff" stroke-width="1.8" fill="none" shape-rendering="auto"/>
<rect x="148" y="282" width="2" height="2" fill="#ffffff"/>
<path d="M160 273 H168 L170 275 V283 L168 285 H160 L158 283 V275 Z" fill="#d49a28"/>
<path d="M160 273 H168 L169 274 H159 Z" fill="#f0c040"/>
<path d="M159 284 H169 L168 285 H160 Z" fill="#a87010"/>
<path d="M165 275.5 L167 277.5 C168 278.5 167.5 280.5 165.5 280.5 H161" stroke="#ffffff" stroke-width="1.7" fill="none" shape-rendering="auto"/>
<path d="M160 280.5 L163 277.5 V283.5 Z" fill="#ffffff" shape-rendering="auto"/>
<text x="176" y="284" font-size="11" fill="#d49c9c" textLength="39" lengthAdjust="spacingAndGlyphs" font-family="Liberation Sans">[TABLE]</text>
<rect x="65" y="289" width="161" height="250" fill="#8c8c8c"/>
<rect x="65" y="289" width="1" height="250" fill="#6e6e6e"/>
<rect x="28.5" y="294.5" width="10" height="8" rx="2" fill="#e4e4e4" stroke="#5a5a96" stroke-width="1" shape-rendering="auto"/>
<rect x="31" y="298" width="5" height="1" fill="#5a5a96"/>
<rect x="39" y="298" width="4" height="1" fill="#5a5a96"/>
<path d="M49.5 290.5 H57.5 L60.5 293.5 V303.5 H49.5 Z" fill="#e8f8e8" stroke="#6a9a6a" stroke-width="1" shape-rendering="auto"/>
<rect x="50" y="291" width="7" height="4" fill="#ffffff"/>
<rect x="57" y="295" width="3" height="8" fill="#c8ecc8"/>
<rect x="45.5" y="294.5" width="10" height="10" rx="1" fill="#ffffff" stroke="#55558a" stroke-width="1" shape-rendering="auto"/>
<rect x="47" y="296" width="7" height="1" fill="#f04848"/>
<rect x="47" y="298" width="7" height="1" fill="#f04848"/>
<rect x="47" y="300" width="7" height="1" fill="#f04848"/>
<rect x="47" y="302" width="7" height="1" fill="#f04848"/>
<text x="69" y="303" font-size="11" fill="#ffffff" font-weight="bold" textLength="69" lengthAdjust="spacingAndGlyphs" font-family="Liberation Sans">Area Section</text>
<path d="M145 292 H153 L155 294 V302 L153 304 H145 L143 302 V294 Z" fill="#d49a28"/>
<path d="M145 292 H153 L154 293 H144 Z" fill="#f0c040"/>
<path d="M144 303 H154 L153 304 H145 Z" fill="#a87010"/>
<path d="M146.5 296.5 C146.5 294 151.5 294 151.5 296.5 C151.5 298 149 298 149 299.5 V300" stroke="#ffffff" stroke-width="1.8" fill="none" shape-rendering="auto"/>
<rect x="148" y="301" width="2" height="2" fill="#ffffff"/>
<path d="M160 292 H168 L170 294 V302 L168 304 H160 L158 302 V294 Z" fill="#d49a28"/>
<path d="M160 292 H168 L169 293 H159 Z" fill="#f0c040"/>
<path d="M159 303 H169 L168 304 H160 Z" fill="#a87010"/>
<path d="M165 294.5 L167 296.5 C168 297.5 167.5 299.5 165.5 299.5 H161" stroke="#ffffff" stroke-width="1.7" fill="none" shape-rendering="auto"/>
<path d="M160 299.5 L163 296.5 V302.5 Z" fill="#ffffff" shape-rendering="auto"/>
<text x="70" y="320" font-size="11" fill="#ffffff" textLength="38" lengthAdjust="spacingAndGlyphs" font-family="Liberation Sans">[TABLE]</text>
<rect x="65" y="539" width="161" height="20" fill="#d4d4d4"/>
<rect x="65" y="539" width="161" height="1" fill="#ffffff"/>
<rect x="65" y="539" width="1" height="20" fill="#ffffff"/>
<rect x="65" y="558" width="161" height="1" fill="#6a6a6a"/>
<rect x="65" y="540" width="161" height="1" fill="#ffffff"/>
<rect x="28.5" y="545.5" width="10" height="8" rx="2" fill="#e4e4e4" stroke="#5a5a96" stroke-width="1" shape-rendering="auto"/>
<rect x="31" y="549" width="5" height="1" fill="#5a5a96"/>
<rect x="33" y="547" width="1" height="5" fill="#5a5a96"/>
<rect x="39" y="549" width="4" height="1" fill="#5a5a96"/>
<path d="M49.5 541.5 H57.5 L60.5 544.5 V554.5 H49.5 Z" fill="#e8f8e8" stroke="#6a9a6a" stroke-width="1" shape-rendering="auto"/>
<rect x="50" y="542" width="7" height="4" fill="#ffffff"/>
<rect x="57" y="546" width="3" height="8" fill="#c8ecc8"/>
<rect x="45.5" y="545.5" width="10" height="10" rx="1" fill="#ffffff" stroke="#55558a" stroke-width="1" shape-rendering="auto"/>
<rect x="47" y="547" width="7" height="1" fill="#f04848"/>
<rect x="47" y="549" width="7" height="1" fill="#f04848"/>
<rect x="47" y="551" width="7" height="1" fill="#f04848"/>
<rect x="47" y="553" width="7" height="1" fill="#f04848"/>
<text x="69" y="554" font-size="11" fill="#5c48a4" font-weight="bold" textLength="69" lengthAdjust="spacingAndGlyphs" font-family="Liberation Sans">Area Section</text>
<path d="M145 543 H153 L155 545 V553 L153 555 H145 L143 553 V545 Z" fill="#d49a28"/>
<path d="M145 543 H153 L154 544 H144 Z" fill="#f0c040"/>
<path d="M144 554 H154 L153 555 H145 Z" fill="#a87010"/>
<path d="M146.5 547.5 C146.5 545 151.5 545 151.5 547.5 C151.5 549 149 549 149 550.5 V551" stroke="#ffffff" stroke-width="1.8" fill="none" shape-rendering="auto"/>
<rect x="148" y="552" width="2" height="2" fill="#ffffff"/>
<path d="M160 543 H168 L170 545 V553 L168 555 H160 L158 553 V545 Z" fill="#d49a28"/>
<path d="M160 543 H168 L169 544 H159 Z" fill="#f0c040"/>
<path d="M159 554 H169 L168 555 H160 Z" fill="#a87010"/>
<path d="M165 545.5 L167 547.5 C168 548.5 167.5 550.5 165.5 550.5 H161" stroke="#ffffff" stroke-width="1.7" fill="none" shape-rendering="auto"/>
<path d="M160 550.5 L163 547.5 V553.5 Z" fill="#ffffff" shape-rendering="auto"/>
<text x="176" y="554" font-size="11" fill="#d49c9c" textLength="39" lengthAdjust="spacingAndGlyphs" font-family="Liberation Sans">[TABLE]</text>
<rect x="65" y="559" width="161" height="19" fill="#d4d4d4"/>
<rect x="65" y="559" width="161" height="1" fill="#ffffff"/>
<rect x="65" y="559" width="1" height="19" fill="#ffffff"/>
<rect x="65" y="577" width="161" height="1" fill="#6a6a6a"/>
<rect x="28.5" y="564.5" width="10" height="8" rx="2" fill="#e4e4e4" stroke="#5a5a96" stroke-width="1" shape-rendering="auto"/>
<rect x="31" y="568" width="5" height="1" fill="#5a5a96"/>
<rect x="33" y="566" width="1" height="5" fill="#5a5a96"/>
<rect x="39" y="568" width="4" height="1" fill="#5a5a96"/>
<path d="M49.5 560.5 H57.5 L60.5 563.5 V573.5 H49.5 Z" fill="#e8f8e8" stroke="#6a9a6a" stroke-width="1" shape-rendering="auto"/>
<rect x="50" y="561" width="7" height="4" fill="#ffffff"/>
<rect x="57" y="565" width="3" height="8" fill="#c8ecc8"/>
<rect x="45.5" y="564.5" width="10" height="10" rx="1" fill="#ffffff" stroke="#55558a" stroke-width="1" shape-rendering="auto"/>
<rect x="47" y="566" width="7" height="1" fill="#f04848"/>
<rect x="47" y="568" width="7" height="1" fill="#f04848"/>
<rect x="47" y="570" width="7" height="1" fill="#f04848"/>
<rect x="47" y="572" width="7" height="1" fill="#f04848"/>
<text x="69" y="573" font-size="11" fill="#5c48a4" font-weight="bold" textLength="69" lengthAdjust="spacingAndGlyphs" font-family="Liberation Sans">Area Section</text>
<text x="144" y="573" font-size="11" fill="#d49c9c" textLength="39" lengthAdjust="spacingAndGlyphs" font-family="Liberation Sans">[TABLE]</text>
<rect x="45" y="578" width="181" height="38" fill="#d4d4d4"/>
<rect x="45" y="578" width="181" height="1" fill="#ffffff"/>
<rect x="45" y="578" width="1" height="38" fill="#ffffff"/>
<rect x="45" y="615" width="181" height="1" fill="#6a6a6a"/>
<rect x="8.5" y="583.5" width="10" height="8" rx="2" fill="#e4e4e4" stroke="#5a5a96" stroke-width="1" shape-rendering="auto"/>
<rect x="11" y="587" width="5" height="1" fill="#5a5a96"/>
<rect x="19" y="587" width="4" height="1" fill="#5a5a96"/>
<path d="M29.5 579.5 H37.5 L40.5 582.5 V592.5 H29.5 Z" fill="#e8f8e8" stroke="#6a9a6a" stroke-width="1" shape-rendering="auto"/>
<rect x="30" y="580" width="7" height="4" fill="#ffffff"/>
<rect x="37" y="584" width="3" height="8" fill="#c8ecc8"/>
<rect x="25.5" y="583.5" width="10" height="10" rx="1" fill="#ffffff" stroke="#55558a" stroke-width="1" shape-rendering="auto"/>
<rect x="27" y="585" width="7" height="1" fill="#f04848"/>
<rect x="27" y="587" width="7" height="1" fill="#f04848"/>
<rect x="27" y="589" width="7" height="1" fill="#f04848"/>
<rect x="27" y="591" width="7" height="1" fill="#f04848"/>
<text x="49" y="592" font-size="11" fill="#5c48a4" font-weight="bold" textLength="69" lengthAdjust="spacingAndGlyphs" font-family="Liberation Sans">Area Section</text>
<path d="M125 581 H133 L135 583 V591 L133 593 H125 L123 591 V583 Z" fill="#d49a28"/>
<path d="M125 581 H133 L134 582 H124 Z" fill="#f0c040"/>
<path d="M124 592 H134 L133 593 H125 Z" fill="#a87010"/>
<path d="M126.5 585.5 C126.5 583 131.5 583 131.5 585.5 C131.5 587 129 587 129 588.5 V589" stroke="#ffffff" stroke-width="1.8" fill="none" shape-rendering="auto"/>
<rect x="128" y="590" width="2" height="2" fill="#ffffff"/>
<text x="50" y="608" font-size="11" fill="#a29ad8" textLength="28" lengthAdjust="spacingAndGlyphs" font-family="Liberation Sans">[pars]</text>
<rect x="1361" y="80" width="1" height="536" fill="#6a6a6a"/>
<rect x="238" y="80" width="1123" height="19" fill="#eecdee"/>
<rect x="238" y="80" width="1123" height="1" fill="#ffffff"/>
<rect x="238" y="80" width="1" height="19" fill="#ffffff"/>
<rect x="238" y="98" width="1123" height="1" fill="#6a6a6a"/>
<text x="243" y="93" font-size="10.5" fill="#5c48a4" font-weight="bold" textLength="116" lengthAdjust="spacingAndGlyphs" font-family="Liberation Sans">Document Template:</text>
<text x="365" y="93" font-size="10.5" fill="#5c48a4" font-weight="bold" textLength="17" lengthAdjust="spacingAndGlyphs" font-family="Liberation Sans">[C:</text>
<text x="382" y="93" font-size="10.5" fill="#5c48a4" font-weight="bold" textLength="5" lengthAdjust="spacingAndGlyphs" font-family="Liberation Sans">\</text>
<text x="388" y="93" font-size="10.5" fill="#5c48a4" font-weight="bold" textLength="92" lengthAdjust="spacingAndGlyphs" font-family="Liberation Sans">flexdoc-javadoc</text>
<text x="481" y="93" font-size="10.5" fill="#5c48a4" font-weight="bold" textLength="5" lengthAdjust="spacingAndGlyphs" font-family="Liberation Sans">\</text>
<text x="487" y="93" font-size="10.5" fill="#5c48a4" font-weight="bold" textLength="60" lengthAdjust="spacingAndGlyphs" font-family="Liberation Sans">templates</text>
<text x="547" y="93" font-size="10.5" fill="#5c48a4" font-weight="bold" textLength="5" lengthAdjust="spacingAndGlyphs" font-family="Liberation Sans">\</text>
<text x="552" y="93" font-size="10.5" fill="#5c48a4" font-weight="bold" textLength="39" lengthAdjust="spacingAndGlyphs" font-family="Liberation Sans">classic</text>
<text x="591" y="93" font-size="10.5" fill="#5c48a4" font-weight="bold" textLength="4" lengthAdjust="spacingAndGlyphs" font-family="Liberation Sans">\</text>
<text x="595" y="93" font-size="10.5" fill="#5c48a4" font-weight="bold" textLength="17" lengthAdjust="spacingAndGlyphs" font-family="Liberation Sans">lib</text>
<text x="612" y="93" font-size="10.5" fill="#5c48a4" font-weight="bold" textLength="5" lengthAdjust="spacingAndGlyphs" font-family="Liberation Sans">\</text>
<text x="617" y="93" font-size="10.5" fill="#5c48a4" font-weight="bold" textLength="25" lengthAdjust="spacingAndGlyphs" font-family="Liberation Sans">frgm</text>
<text x="642" y="93" font-size="10.5" fill="#5c48a4" font-weight="bold" textLength="5" lengthAdjust="spacingAndGlyphs" font-family="Liberation Sans">\</text>
<text x="648" y="93" font-size="10.5" fill="#5c48a4" font-weight="bold" textLength="65" lengthAdjust="spacingAndGlyphs" font-family="Liberation Sans">navbar.tpl]</text>
<rect x="238" y="99" width="1123" height="37" fill="#eeeeee"/>
<rect x="242" y="104" width="1116" height="2" fill="#787878"/>
<path d="M239 110h4v1h-4z M245 110h4v1h-4z M251 110h4v1h-4z M257 110h4v1h-4z M263 110h4v1h-4z M269 110h4v1h-4z M275 110h4v1h-4z M281 110h4v1h-4z M287 110h4v1h-4z M293 110h4v1h-4z M299 110h4v1h-4z M305 110h4v1h-4z M311 110h4v1h-4z M317 110h4v1h-4z M323 110h4v1h-4z M329 110h4v1h-4z M335 110h4v1h-4z M341 110h4v1h-4z M347 110h4v1h-4z M353 110h4v1h-4z M359 110h4v1h-4z M365 110h4v1h-4z M371 110h4v1h-4z M377 110h4v1h-4z M383 110h4v1h-4z M389 110h4v1h-4z M395 110h4v1h-4z M401 110h4v1h-4z M407 110h4v1h-4z M413 110h4v1h-4z M419 110h4v1h-4z M425 110h4v1h-4z M431 110h4v1h-4z M437 110h4v1h-4z M443 110h4v1h-4z M449 110h4v1h-4z M455 110h4v1h-4z M461 110h4v1h-4z M467 110h4v1h-4z M473 110h4v1h-4z M479 110h4v1h-4z M485 110h4v1h-4z M491 110h4v1h-4z M497 110h4v1h-4z M503 110h4v1h-4z M509 110h4v1h-4z M515 110h4v1h-4z M521 110h4v1h-4z M527 110h4v1h-4z M533 110h4v1h-4z M539 110h4v1h-4z M545 110h4v1h-4z M551 110h4v1h-4z M557 110h4v1h-4z M563 110h4v1h-4z M569 110h4v1h-4z M575 110h4v1h-4z M581 110h4v1h-4z M587 110h4v1h-4z M593 110h4v1h-4z M599 110h4v1h-4z M605 110h4v1h-4z M611 110h4v1h-4z M617 110h4v1h-4z M623 110h4v1h-4z M629 110h4v1h-4z M635 110h4v1h-4z M641 110h4v1h-4z M647 110h4v1h-4z M653 110h4v1h-4z M659 110h4v1h-4z M665 110h4v1h-4z M671 110h4v1h-4z M677 110h4v1h-4z M683 110h4v1h-4z M689 110h4v1h-4z M695 110h4v1h-4z M701 110h4v1h-4z M707 110h4v1h-4z M713 110h4v1h-4z M719 110h4v1h-4z M725 110h4v1h-4z M731 110h4v1h-4z M737 110h4v1h-4z M743 110h4v1h-4z M749 110h4v1h-4z M755 110h4v1h-4z M761 110h4v1h-4z M767 110h4v1h-4z M773 110h4v1h-4z M779 110h4v1h-4z M785 110h4v1h-4z M791 110h4v1h-4z M797 110h4v1h-4z M803 110h4v1h-4z M809 110h4v1h-4z M815 110h4v1h-4z M821 110h4v1h-4z M827 110h4v1h-4z M833 110h4v1h-4z M839 110h4v1h-4z M845 110h4v1h-4z M851 110h4v1h-4z M857 110h4v1h-4z M863 110h4v1h-4z M869 110h4v1h-4z M875 110h4v1h-4z M881 110h4v1h-4z M887 110h4v1h-4z M893 110h4v1h-4z M899 110h4v1h-4z M905 110h4v1h-4z M911 110h4v1h-4z M917 110h4v1h-4z M923 110h4v1h-4z M929 110h4v1h-4z M935 110h4v1h-4z M941 110h4v1h-4z M947 110h4v1h-4z M953 110h4v1h-4z M959 110h4v1h-4z M965 110h4v1h-4z M971 110h4v1h-4z M977 110h4v1h-4z M983 110h4v1h-4z M989 110h4v1h-4z M995 110h4v1h-4z M1001 110h4v1h-4z M1007 110h4v1h-4z M1013 110h4v1h-4z M1019 110h4v1h-4z M1025 110h4v1h-4z M1031 110h4v1h-4z M1037 110h4v1h-4z M1043 110h4v1h-4z M1049 110h4v1h-4z M1055 110h4v1h-4z M1061 110h4v1h-4z M1067 110h4v1h-4z M1073 110h4v1h-4z M1079 110h4v1h-4z M1085 110h4v1h-4z M1091 110h4v1h-4z M1097 110h4v1h-4z M1103 110h4v1h-4z M1109 110h4v1h-4z M1115 110h4v1h-4z M1121 110h4v1h-4z M1127 110h4v1h-4z M1133 110h4v1h-4z M1139 110h4v1h-4z M1145 110h4v1h-4z M1151 110h4v1h-4z M1157 110h4v1h-4z M1163 110h4v1h-4z M1169 110h4v1h-4z M1175 110h4v1h-4z M1181 110h4v1h-4z M1187 110h4v1h-4z M1193 110h4v1h-4z M1199 110h4v1h-4z M1205 110h4v1h-4z M1211 110h4v1h-4z M1217 110h4v1h-4z M1223 110h4v1h-4z M1229 110h4v1h-4z M1235 110h4v1h-4z M1241 110h4v1h-4z M1247 110h4v1h-4z M1253 110h4v1h-4z M1259 110h4v1h-4z M1265 110h4v1h-4z M1271 110h4v1h-4z M1277 110h4v1h-4z M1283 110h4v1h-4z M1289 110h4v1h-4z M1295 110h4v1h-4z M1301 110h4v1h-4z M1307 110h4v1h-4z M1313 110h4v1h-4z M1319 110h4v1h-4z M1325 110h4v1h-4z M1331 110h4v1h-4z M1337 110h4v1h-4z M1343 110h4v1h-4z M1349 110h4v1h-4z M1355 110h4v1h-4z" fill="#ffffff"/>
<rect x="238" y="136" width="1123" height="1" fill="#6a6a6a"/>
<rect x="238" y="137" width="1123" height="19" fill="#d4d4d4"/>
<rect x="238" y="137" width="1123" height="1" fill="#ffffff"/>
<rect x="238" y="137" width="1" height="19" fill="#ffffff"/>
<rect x="238" y="155" width="1123" height="1" fill="#6a6a6a"/>
<text x="243" y="150" font-size="10.5" fill="#5c48a4" font-weight="bold" textLength="79" lengthAdjust="spacingAndGlyphs" font-family="Liberation Sans">Folder Section</text>
<text x="327" y="150" font-size="10.5" fill="#b89a6c" font-weight="bold" textLength="239" lengthAdjust="spacingAndGlyphs" font-family="Liberation Sans">-- Navigation bars for different document types</text>
<rect x="238" y="156" width="19" height="19" fill="#cccccc"/>
<rect x="257" y="156" width="1" height="19" fill="#6a6a6a"/>
<rect x="258" y="156" width="1103" height="19" fill="#d4d4d4"/>
<rect x="258" y="156" width="1103" height="1" fill="#ffffff"/>
<rect x="258" y="156" width="1" height="19" fill="#ffffff"/>
<rect x="238" y="156" width="19" height="1" fill="#ffffff"/>
<rect x="238" y="174" width="1123" height="1" fill="#6a6a6a"/>
<text x="263" y="169" font-size="10.5" fill="#5c48a4" font-weight="bold" textLength="211" lengthAdjust="spacingAndGlyphs" font-family="Liberation Sans">Area Section for &#x27;DocletEnvironment&#x27;</text>
<text x="479" y="169" font-size="10.5" fill="#b89a6c" font-weight="bold" textLength="57" lengthAdjust="spacingAndGlyphs" font-family="Liberation Sans">-- Overview</text>
<rect x="238" y="175" width="19" height="19" fill="#cccccc"/>
<rect x="257" y="175" width="1" height="19" fill="#6a6a6a"/>
<rect x="258" y="175" width="1103" height="19" fill="#d4d4d4"/>
<rect x="258" y="175" width="1103" height="1" fill="#ffffff"/>
<rect x="258" y="175" width="1" height="19" fill="#ffffff"/>
<rect x="238" y="175" width="19" height="1" fill="#ffffff"/>
<rect x="238" y="193" width="1123" height="1" fill="#6a6a6a"/>
<text x="263" y="188" font-size="10.5" fill="#5c48a4" font-weight="bold" textLength="141" lengthAdjust="spacingAndGlyphs" font-family="Liberation Sans">Area Section for &#x27;Module&#x27;</text>
<text x="408" y="188" font-size="10.5" fill="#b89a6c" font-weight="bold" textLength="46" lengthAdjust="spacingAndGlyphs" font-family="Liberation Sans">-- Module</text>
<rect x="238" y="194" width="19" height="19" fill="#cccccc"/>
<rect x="257" y="194" width="1" height="19" fill="#6a6a6a"/>
<rect x="258" y="194" width="1103" height="19" fill="#d4d4d4"/>
<rect x="258" y="194" width="1103" height="1" fill="#ffffff"/>
<rect x="258" y="194" width="1" height="19" fill="#ffffff"/>
<rect x="238" y="194" width="19" height="1" fill="#ffffff"/>
<rect x="238" y="212" width="1123" height="1" fill="#6a6a6a"/>
<text x="263" y="207" font-size="10.5" fill="#5c48a4" font-weight="bold" textLength="150" lengthAdjust="spacingAndGlyphs" font-family="Liberation Sans">Area Section for &#x27;Package&#x27;</text>
<text x="417" y="207" font-size="10.5" fill="#b89a6c" font-weight="bold" textLength="52" lengthAdjust="spacingAndGlyphs" font-family="Liberation Sans">-- Package</text>
<rect x="238" y="213" width="19" height="19" fill="#cccccc"/>
<rect x="257" y="213" width="1" height="19" fill="#6a6a6a"/>
<rect x="258" y="213" width="1103" height="19" fill="#d4d4d4"/>
<rect x="258" y="213" width="1103" height="1" fill="#ffffff"/>
<rect x="258" y="213" width="1" height="19" fill="#ffffff"/>
<rect x="238" y="213" width="19" height="1" fill="#ffffff"/>
<rect x="238" y="231" width="1123" height="1" fill="#6a6a6a"/>
<text x="263" y="226" font-size="10.5" fill="#5c48a4" font-weight="bold" textLength="129" lengthAdjust="spacingAndGlyphs" font-family="Liberation Sans">Area Section for &#x27;Class&#x27;</text>
<text x="397" y="226" font-size="10.5" fill="#b89a6c" font-weight="bold" textLength="36" lengthAdjust="spacingAndGlyphs" font-family="Liberation Sans">-- Class</text>
<rect x="238" y="232" width="19" height="19" fill="#cccccc"/>
<rect x="257" y="232" width="1" height="19" fill="#6a6a6a"/>
<rect x="258" y="232" width="1103" height="19" fill="#d4d4d4"/>
<rect x="258" y="232" width="1103" height="1" fill="#ffffff"/>
<rect x="258" y="232" width="1" height="19" fill="#ffffff"/>
<rect x="238" y="232" width="19" height="1" fill="#ffffff"/>
<rect x="238" y="250" width="1123" height="1" fill="#6a6a6a"/>
<text x="263" y="245" font-size="10.5" fill="#5c48a4" font-weight="bold" textLength="190" lengthAdjust="spacingAndGlyphs" font-family="Liberation Sans">Area Section for &#x27;Class | Package&#x27;</text>
<text x="457" y="245" font-size="10.5" fill="#b89a6c" font-weight="bold" textLength="29" lengthAdjust="spacingAndGlyphs" font-family="Liberation Sans">-- Use</text>
<rect x="238" y="251" width="19" height="19" fill="#cccccc"/>
<rect x="257" y="251" width="1" height="19" fill="#6a6a6a"/>
<rect x="258" y="251" width="1103" height="19" fill="#d4d4d4"/>
<rect x="258" y="251" width="1103" height="1" fill="#ffffff"/>
<rect x="258" y="251" width="1" height="19" fill="#ffffff"/>
<rect x="238" y="251" width="19" height="1" fill="#ffffff"/>
<rect x="238" y="269" width="1123" height="1" fill="#6a6a6a"/>
<text x="263" y="264" font-size="10.5" fill="#5c48a4" font-weight="bold" textLength="271" lengthAdjust="spacingAndGlyphs" font-family="Liberation Sans">Area Section for &#x27;DocletEnvironment | Package&#x27;</text>
<text x="538" y="264" font-size="10.5" fill="#b89a6c" font-weight="bold" textLength="33" lengthAdjust="spacingAndGlyphs" font-family="Liberation Sans">-- Tree</text>
<rect x="238" y="270" width="19" height="19" fill="#cccccc"/>
<rect x="257" y="270" width="1" height="19" fill="#6a6a6a"/>
<rect x="258" y="270" width="1103" height="19" fill="#d4d4d4"/>
<rect x="258" y="270" width="1103" height="1" fill="#ffffff"/>
<rect x="258" y="270" width="1" height="19" fill="#ffffff"/>
<rect x="238" y="270" width="19" height="1" fill="#ffffff"/>
<rect x="238" y="288" width="1123" height="1" fill="#6a6a6a"/>
<text x="263" y="283" font-size="10.5" fill="#5c48a4" font-weight="bold" textLength="211" lengthAdjust="spacingAndGlyphs" font-family="Liberation Sans">Area Section for &#x27;DocletEnvironment&#x27;</text>
<text x="479" y="283" font-size="10.5" fill="#b89a6c" font-weight="bold" textLength="66" lengthAdjust="spacingAndGlyphs" font-family="Liberation Sans">-- Deprecated</text>
<rect x="238" y="539" width="1123" height="1" fill="#6a6a6a"/>
<rect x="238" y="540" width="19" height="19" fill="#cccccc"/>
<rect x="257" y="540" width="1" height="19" fill="#6a6a6a"/>
<rect x="258" y="540" width="1103" height="19" fill="#d4d4d4"/>
<rect x="258" y="540" width="1103" height="1" fill="#ffffff"/>
<rect x="258" y="540" width="1" height="19" fill="#ffffff"/>
<rect x="238" y="540" width="19" height="1" fill="#ffffff"/>
<rect x="238" y="558" width="1123" height="1" fill="#6a6a6a"/>
<text x="263" y="553" font-size="10.5" fill="#5c48a4" font-weight="bold" textLength="211" lengthAdjust="spacingAndGlyphs" font-family="Liberation Sans">Area Section for &#x27;DocletEnvironment&#x27;</text>
<text x="478" y="553" font-size="10.5" fill="#b89a6c" font-weight="bold" textLength="32" lengthAdjust="spacingAndGlyphs" font-family="Liberation Sans">-- Help</text>
<rect x="238" y="559" width="19" height="19" fill="#cccccc"/>
<rect x="257" y="559" width="1" height="19" fill="#6a6a6a"/>
<rect x="258" y="559" width="1103" height="19" fill="#d4d4d4"/>
<rect x="258" y="559" width="1103" height="1" fill="#ffffff"/>
<rect x="258" y="559" width="1" height="19" fill="#ffffff"/>
<rect x="238" y="559" width="19" height="1" fill="#ffffff"/>
<rect x="238" y="577" width="1123" height="1" fill="#6a6a6a"/>
<text x="263" y="572" font-size="10.5" fill="#5c48a4" font-weight="bold" textLength="71" lengthAdjust="spacingAndGlyphs" font-family="Liberation Sans">Area Section</text>
<text x="339" y="572" font-size="10.5" fill="#b89a6c" font-weight="bold" textLength="57" lengthAdjust="spacingAndGlyphs" font-family="Liberation Sans">-- (default)</text>
<rect x="238" y="578" width="1123" height="37" fill="#eeeeee"/>
<rect x="242" y="583" width="1116" height="2" fill="#787878"/>
<path d="M239 589h4v1h-4z M245 589h4v1h-4z M251 589h4v1h-4z M257 589h4v1h-4z M263 589h4v1h-4z M269 589h4v1h-4z M275 589h4v1h-4z M281 589h4v1h-4z M287 589h4v1h-4z M293 589h4v1h-4z M299 589h4v1h-4z M305 589h4v1h-4z M311 589h4v1h-4z M317 589h4v1h-4z M323 589h4v1h-4z M329 589h4v1h-4z M335 589h4v1h-4z M341 589h4v1h-4z M347 589h4v1h-4z M353 589h4v1h-4z M359 589h4v1h-4z M365 589h4v1h-4z M371 589h4v1h-4z M377 589h4v1h-4z M383 589h4v1h-4z M389 589h4v1h-4z M395 589h4v1h-4z M401 589h4v1h-4z M407 589h4v1h-4z M413 589h4v1h-4z M419 589h4v1h-4z M425 589h4v1h-4z M431 589h4v1h-4z M437 589h4v1h-4z M443 589h4v1h-4z M449 589h4v1h-4z M455 589h4v1h-4z M461 589h4v1h-4z M467 589h4v1h-4z M473 589h4v1h-4z M479 589h4v1h-4z M485 589h4v1h-4z M491 589h4v1h-4z M497 589h4v1h-4z M503 589h4v1h-4z M509 589h4v1h-4z M515 589h4v1h-4z M521 589h4v1h-4z M527 589h4v1h-4z M533 589h4v1h-4z M539 589h4v1h-4z M545 589h4v1h-4z M551 589h4v1h-4z M557 589h4v1h-4z M563 589h4v1h-4z M569 589h4v1h-4z M575 589h4v1h-4z M581 589h4v1h-4z M587 589h4v1h-4z M593 589h4v1h-4z M599 589h4v1h-4z M605 589h4v1h-4z M611 589h4v1h-4z M617 589h4v1h-4z M623 589h4v1h-4z M629 589h4v1h-4z M635 589h4v1h-4z M641 589h4v1h-4z M647 589h4v1h-4z M653 589h4v1h-4z M659 589h4v1h-4z M665 589h4v1h-4z M671 589h4v1h-4z M677 589h4v1h-4z M683 589h4v1h-4z M689 589h4v1h-4z M695 589h4v1h-4z M701 589h4v1h-4z M707 589h4v1h-4z M713 589h4v1h-4z M719 589h4v1h-4z M725 589h4v1h-4z M731 589h4v1h-4z M737 589h4v1h-4z M743 589h4v1h-4z M749 589h4v1h-4z M755 589h4v1h-4z M761 589h4v1h-4z M767 589h4v1h-4z M773 589h4v1h-4z M779 589h4v1h-4z M785 589h4v1h-4z M791 589h4v1h-4z M797 589h4v1h-4z M803 589h4v1h-4z M809 589h4v1h-4z M815 589h4v1h-4z M821 589h4v1h-4z M827 589h4v1h-4z M833 589h4v1h-4z M839 589h4v1h-4z M845 589h4v1h-4z M851 589h4v1h-4z M857 589h4v1h-4z M863 589h4v1h-4z M869 589h4v1h-4z M875 589h4v1h-4z M881 589h4v1h-4z M887 589h4v1h-4z M893 589h4v1h-4z M899 589h4v1h-4z M905 589h4v1h-4z M911 589h4v1h-4z M917 589h4v1h-4z M923 589h4v1h-4z M929 589h4v1h-4z M935 589h4v1h-4z M941 589h4v1h-4z M947 589h4v1h-4z M953 589h4v1h-4z M959 589h4v1h-4z M965 589h4v1h-4z M971 589h4v1h-4z M977 589h4v1h-4z M983 589h4v1h-4z M989 589h4v1h-4z M995 589h4v1h-4z M1001 589h4v1h-4z M1007 589h4v1h-4z M1013 589h4v1h-4z M1019 589h4v1h-4z M1025 589h4v1h-4z M1031 589h4v1h-4z M1037 589h4v1h-4z M1043 589h4v1h-4z M1049 589h4v1h-4z M1055 589h4v1h-4z M1061 589h4v1h-4z M1067 589h4v1h-4z M1073 589h4v1h-4z M1079 589h4v1h-4z M1085 589h4v1h-4z M1091 589h4v1h-4z M1097 589h4v1h-4z M1103 589h4v1h-4z M1109 589h4v1h-4z M1115 589h4v1h-4z M1121 589h4v1h-4z M1127 589h4v1h-4z M1133 589h4v1h-4z M1139 589h4v1h-4z M1145 589h4v1h-4z M1151 589h4v1h-4z M1157 589h4v1h-4z M1163 589h4v1h-4z M1169 589h4v1h-4z M1175 589h4v1h-4z M1181 589h4v1h-4z M1187 589h4v1h-4z M1193 589h4v1h-4z M1199 589h4v1h-4z M1205 589h4v1h-4z M1211 589h4v1h-4z M1217 589h4v1h-4z M1223 589h4v1h-4z M1229 589h4v1h-4z M1235 589h4v1h-4z M1241 589h4v1h-4z M1247 589h4v1h-4z M1253 589h4v1h-4z M1259 589h4v1h-4z M1265 589h4v1h-4z M1271 589h4v1h-4z M1277 589h4v1h-4z M1283 589h4v1h-4z M1289 589h4v1h-4z M1295 589h4v1h-4z M1301 589h4v1h-4z M1307 589h4v1h-4z M1313 589h4v1h-4z M1319 589h4v1h-4z M1325 589h4v1h-4z M1331 589h4v1h-4z M1337 589h4v1h-4z M1343 589h4v1h-4z M1349 589h4v1h-4z M1355 589h4v1h-4z" fill="#ffffff"/>
<rect x="238" y="615" width="1124" height="1" fill="#6a6a6a"/>
<rect x="238" y="289" width="1123" height="250" fill="#eeeeee"/>
<rect x="238" y="289" width="1123" height="1" fill="#7c72c0"/>
<rect x="238" y="538" width="1123" height="1" fill="#7c72c0"/>
<rect x="238" y="289" width="1" height="250" fill="#7c72c0"/>
<rect x="1360" y="289" width="1" height="250" fill="#7c72c0"/>
<rect x="242" y="293" width="1115" height="1" fill="#a6a6a6"/>
<rect x="242" y="534" width="1115" height="1" fill="#a6a6a6"/>
<rect x="242" y="293" width="1" height="242" fill="#a6a6a6"/>
<rect x="1356" y="293" width="1" height="242" fill="#a6a6a6"/>
<rect x="243" y="294" width="1113" height="240" fill="url(#hatch)"/>
<rect x="247" y="298" width="1025" height="232" fill="#eeeeee"/>
<rect x="247" y="298" width="1025" height="1" fill="#b4cce6"/>
<rect x="247" y="298" width="1" height="232" fill="#b4cce6"/>
<rect x="247" y="529" width="1025" height="1" fill="#7a8aa0"/>
<rect x="1271" y="298" width="1" height="232" fill="#7a8aa0"/>
<rect x="252" y="303" width="1015" height="222" fill="#eeeeee"/>
<rect x="252" y="303" width="1015" height="1" fill="#7a8aa0"/>
<rect x="252" y="303" width="1" height="222" fill="#7a8aa0"/>
<rect x="252" y="524" width="1015" height="1" fill="#b4cce6"/>
<rect x="1266" y="303" width="1" height="222" fill="#b4cce6"/>
<rect x="256" y="307" width="1007" height="1" fill="#a6a6a6"/>
<rect x="256" y="391" width="1007" height="1" fill="#a6a6a6"/>
<rect x="256" y="307" width="1" height="85" fill="#a6a6a6"/>
<rect x="1262" y="307" width="1" height="85" fill="#a6a6a6"/>
<rect x="257" y="308" width="1005" height="83" fill="url(#hatch)"/>
<rect x="261" y="312" width="997" height="75" fill="#eeeeee"/>
<rect x="261" y="312" width="997" height="1" fill="#b4cce6"/>
<rect x="261" y="312" width="1" height="75" fill="#b4cce6"/>
<rect x="261" y="386" width="997" height="1" fill="#7a8aa0"/>
<rect x="1257" y="312" width="1" height="75" fill="#7a8aa0"/>
<rect x="266" y="317" width="987" height="65" fill="#eeeefe"/>
<rect x="266" y="317" width="987" height="1" fill="#7a8aa0"/>
<rect x="266" y="317" width="1" height="65" fill="#7a8aa0"/>
<rect x="266" y="381" width="987" height="1" fill="#b4cce6"/>
<rect x="1252" y="317" width="1" height="65" fill="#b4cce6"/>
<rect x="270" y="321" width="979" height="1" fill="#a6a6a6"/>
<rect x="270" y="377" width="979" height="1" fill="#a6a6a6"/>
<rect x="270" y="321" width="1" height="57" fill="#a6a6a6"/>
<rect x="1248" y="321" width="1" height="57" fill="#a6a6a6"/>
<rect x="271" y="322" width="977" height="55" fill="url(#lhatch)"/>
<rect x="275" y="326" width="116" height="47" fill="#eeeeee"/>
<rect x="275" y="326" width="116" height="1" fill="#b4cce6"/>
<rect x="275" y="326" width="1" height="47" fill="#b4cce6"/>
<rect x="275" y="372" width="116" height="1" fill="#7a8aa0"/>
<rect x="390" y="326" width="1" height="47" fill="#7a8aa0"/>
<rect x="280" y="331" width="106" height="37" fill="#eeeefe"/>
<rect x="280" y="331" width="106" height="1" fill="#7a8aa0"/>
<rect x="280" y="331" width="1" height="37" fill="#7a8aa0"/>
<rect x="280" y="367" width="106" height="1" fill="#b4cce6"/>
<rect x="385" y="331" width="1" height="37" fill="#b4cce6"/>
<rect x="284" y="335" width="98" height="1" fill="#a6a6a6"/>
<rect x="284" y="363" width="98" height="1" fill="#a6a6a6"/>
<rect x="284" y="335" width="1" height="29" fill="#a6a6a6"/>
<rect x="381" y="335" width="1" height="29" fill="#a6a6a6"/>
<rect x="285" y="336" width="96" height="27" fill="url(#lhatch)"/>
<path d="M289 340h4v1h-4z M289 358h4v1h-4z M295 340h4v1h-4z M295 358h4v1h-4z M301 340h4v1h-4z M301 358h4v1h-4z M307 340h4v1h-4z M307 358h4v1h-4z M313 340h4v1h-4z M313 358h4v1h-4z M319 340h4v1h-4z M319 358h4v1h-4z M325 340h4v1h-4z M325 358h4v1h-4z M331 340h4v1h-4z M331 358h4v1h-4z M337 340h1v1h-1z M337 358h1v1h-1z M289 340v4h1v-4z M337 340v4h1v-4z M289 346v4h1v-4z M337 346v4h1v-4z M289 352v4h1v-4z M337 352v4h1v-4z M289 358v1h1v-1z M337 358v1h1v-1z" fill="#888888"/>
<path d="M343 340h4v1h-4z M343 358h4v1h-4z M349 340h3v1h-3z M349 358h3v1h-3z M343 340v4h1v-4z M351 340v4h1v-4z M343 346v4h1v-4z M351 346v4h1v-4z M343 352v4h1v-4z M351 352v4h1v-4z M343 358v1h1v-1z M351 358v1h1v-1z" fill="#888888"/>
<text x="293" y="352" font-size="10" fill="#000000" textLength="42" lengthAdjust="spacingAndGlyphs" font-family="Liberation Sans">Overview</text>
<rect x="395" y="326" width="111" height="47" fill="#eeeeee"/>
<rect x="395" y="326" width="111" height="1" fill="#b4cce6"/>
<rect x="395" y="326" width="1" height="47" fill="#b4cce6"/>
<rect x="395" y="372" width="111" height="1" fill="#7a8aa0"/>
<rect x="505" y="326" width="1" height="47" fill="#7a8aa0"/>
<rect x="400" y="331" width="101" height="37" fill="#eeeefe"/>
<rect x="400" y="331" width="101" height="1" fill="#7a8aa0"/>
<rect x="400" y="331" width="1" height="37" fill="#7a8aa0"/>
<rect x="400" y="367" width="101" height="1" fill="#b4cce6"/>
<rect x="500" y="331" width="1" height="37" fill="#b4cce6"/>
<rect x="404" y="335" width="93" height="1" fill="#a6a6a6"/>
<rect x="404" y="363" width="93" height="1" fill="#a6a6a6"/>
<rect x="404" y="335" width="1" height="29" fill="#a6a6a6"/>
<rect x="496" y="335" width="1" height="29" fill="#a6a6a6"/>
<rect x="405" y="336" width="91" height="27" fill="url(#lhatch)"/>
<path d="M409 340h4v1h-4z M409 358h4v1h-4z M415 340h4v1h-4z M415 358h4v1h-4z M421 340h4v1h-4z M421 358h4v1h-4z M427 340h4v1h-4z M427 358h4v1h-4z M433 340h4v1h-4z M433 358h4v1h-4z M439 340h4v1h-4z M439 358h4v1h-4z M445 340h4v1h-4z M445 358h4v1h-4z M451 340h1v1h-1z M451 358h1v1h-1z M409 340v4h1v-4z M451 340v4h1v-4z M409 346v4h1v-4z M451 346v4h1v-4z M409 352v4h1v-4z M451 352v4h1v-4z M409 358v1h1v-1z M451 358v1h1v-1z" fill="#888888"/>
<path d="M456 340h4v1h-4z M456 358h4v1h-4z M462 340h4v1h-4z M462 358h4v1h-4z M456 340v4h1v-4z M465 340v4h1v-4z M456 346v4h1v-4z M465 346v4h1v-4z M456 352v4h1v-4z M465 352v4h1v-4z M456 358v1h1v-1z M465 358v1h1v-1z" fill="#888888"/>
<text x="412" y="352" font-size="10" fill="#000000" textLength="36" lengthAdjust="spacingAndGlyphs" font-family="Liberation Sans">Module</text>
<rect x="510" y="326" width="111" height="47" fill="#eeeeee"/>
<rect x="510" y="326" width="111" height="1" fill="#b4cce6"/>
<rect x="510" y="326" width="1" height="47" fill="#b4cce6"/>
<rect x="510" y="372" width="111" height="1" fill="#7a8aa0"/>
<rect x="620" y="326" width="1" height="47" fill="#7a8aa0"/>
<rect x="515" y="331" width="101" height="37" fill="#eeeefe"/>
<rect x="515" y="331" width="101" height="1" fill="#7a8aa0"/>
<rect x="515" y="331" width="1" height="37" fill="#7a8aa0"/>
<rect x="515" y="367" width="101" height="1" fill="#b4cce6"/>
<rect x="615" y="331" width="1" height="37" fill="#b4cce6"/>
<rect x="519" y="335" width="93" height="1" fill="#a6a6a6"/>
<rect x="519" y="363" width="93" height="1" fill="#a6a6a6"/>
<rect x="519" y="335" width="1" height="29" fill="#a6a6a6"/>
<rect x="611" y="335" width="1" height="29" fill="#a6a6a6"/>
<rect x="520" y="336" width="91" height="27" fill="url(#lhatch)"/>
<path d="M524 340h4v1h-4z M524 358h4v1h-4z M530 340h4v1h-4z M530 358h4v1h-4z M536 340h4v1h-4z M536 358h4v1h-4z M542 340h4v1h-4z M542 358h4v1h-4z M548 340h4v1h-4z M548 358h4v1h-4z M554 340h4v1h-4z M554 358h4v1h-4z M560 340h4v1h-4z M560 358h4v1h-4z M566 340h4v1h-4z M566 358h4v1h-4z M524 340v4h1v-4z M571 340v4h1v-4z M524 346v4h1v-4z M571 346v4h1v-4z M524 352v4h1v-4z M571 352v4h1v-4z M524 358v1h1v-1z M571 358v1h1v-1z" fill="#888888"/>
<path d="M576 340h4v1h-4z M576 358h4v1h-4z M582 340h4v1h-4z M582 358h4v1h-4z M576 340v4h1v-4z M585 340v4h1v-4z M576 346v4h1v-4z M585 346v4h1v-4z M576 352v4h1v-4z M585 352v4h1v-4z M576 358v1h1v-1z M585 358v1h1v-1z" fill="#888888"/>
<text x="527" y="352" font-size="10" fill="#000000" textLength="42" lengthAdjust="spacingAndGlyphs" font-family="Liberation Sans">Package</text>
<rect x="625" y="326" width="96" height="47" fill="#eeeeee"/>
<rect x="625" y="326" width="96" height="1" fill="#b4cce6"/>
<rect x="625" y="326" width="1" height="47" fill="#b4cce6"/>
<rect x="625" y="372" width="96" height="1" fill="#7a8aa0"/>
<rect x="720" y="326" width="1" height="47" fill="#7a8aa0"/>
<rect x="630" y="331" width="86" height="37" fill="#eeeefe"/>
<rect x="630" y="331" width="86" height="1" fill="#7a8aa0"/>
<rect x="630" y="331" width="1" height="37" fill="#7a8aa0"/>
<rect x="630" y="367" width="86" height="1" fill="#b4cce6"/>
<rect x="715" y="331" width="1" height="37" fill="#b4cce6"/>
<rect x="634" y="335" width="78" height="1" fill="#a6a6a6"/>
<rect x="634" y="363" width="78" height="1" fill="#a6a6a6"/>
<rect x="634" y="335" width="1" height="29" fill="#a6a6a6"/>
<rect x="711" y="335" width="1" height="29" fill="#a6a6a6"/>
<rect x="635" y="336" width="76" height="27" fill="url(#lhatch)"/>
<path d="M639 340h4v1h-4z M639 358h4v1h-4z M645 340h4v1h-4z M645 358h4v1h-4z M651 340h4v1h-4z M651 358h4v1h-4z M657 340h4v1h-4z M657 358h4v1h-4z M663 340h4v1h-4z M663 358h4v1h-4z M669 340h1v1h-1z M669 358h1v1h-1z M639 340v4h1v-4z M669 340v4h1v-4z M639 346v4h1v-4z M669 346v4h1v-4z M639 352v4h1v-4z M669 352v4h1v-4z M639 358v1h1v-1z M669 358v1h1v-1z" fill="#888888"/>
<path d="M674 340h4v1h-4z M674 358h4v1h-4z M680 340h4v1h-4z M680 358h4v1h-4z M674 340v4h1v-4z M683 340v4h1v-4z M674 346v4h1v-4z M683 346v4h1v-4z M674 352v4h1v-4z M683 352v4h1v-4z M674 358v1h1v-1z M683 358v1h1v-1z" fill="#888888"/>
<text x="642" y="352" font-size="10" fill="#000000" textLength="25" lengthAdjust="spacingAndGlyphs" font-family="Liberation Sans">Class</text>
<rect x="725" y="326" width="88" height="47" fill="#eeeeee"/>
<rect x="725" y="326" width="88" height="1" fill="#b4cce6"/>
<rect x="725" y="326" width="1" height="47" fill="#b4cce6"/>
<rect x="725" y="372" width="88" height="1" fill="#7a8aa0"/>
<rect x="812" y="326" width="1" height="47" fill="#7a8aa0"/>
<rect x="730" y="331" width="78" height="37" fill="#eeeefe"/>
<rect x="730" y="331" width="78" height="1" fill="#7a8aa0"/>
<rect x="730" y="331" width="1" height="37" fill="#7a8aa0"/>
<rect x="730" y="367" width="78" height="1" fill="#b4cce6"/>
<rect x="807" y="331" width="1" height="37" fill="#b4cce6"/>
<rect x="734" y="335" width="70" height="1" fill="#a6a6a6"/>
<rect x="734" y="363" width="70" height="1" fill="#a6a6a6"/>
<rect x="734" y="335" width="1" height="29" fill="#a6a6a6"/>
<rect x="803" y="335" width="1" height="29" fill="#a6a6a6"/>
<rect x="735" y="336" width="68" height="27" fill="url(#lhatch)"/>
<path d="M739 340h4v1h-4z M739 358h4v1h-4z M745 340h4v1h-4z M745 358h4v1h-4z M751 340h4v1h-4z M751 358h4v1h-4z M757 340h4v1h-4z M757 358h4v1h-4z M739 340v4h1v-4z M762 340v4h1v-4z M739 346v4h1v-4z M762 346v4h1v-4z M739 352v4h1v-4z M762 352v4h1v-4z M739 358v1h1v-1z M762 358v1h1v-1z" fill="#888888"/>
<path d="M767 340h4v1h-4z M767 358h4v1h-4z M773 340h4v1h-4z M773 358h4v1h-4z M767 340v4h1v-4z M776 340v4h1v-4z M767 346v4h1v-4z M776 346v4h1v-4z M767 352v4h1v-4z M776 352v4h1v-4z M767 358v1h1v-1z M776 358v1h1v-1z" fill="#888888"/>
<text x="742" y="352" font-size="10" fill="#000000" textLength="18" lengthAdjust="spacingAndGlyphs" font-family="Liberation Sans">Use</text>
<rect x="817" y="326" width="90" height="47" fill="#eeeeee"/>
<rect x="817" y="326" width="90" height="1" fill="#b4cce6"/>
<rect x="817" y="326" width="1" height="47" fill="#b4cce6"/>
<rect x="817" y="372" width="90" height="1" fill="#7a8aa0"/>
<rect x="906" y="326" width="1" height="47" fill="#7a8aa0"/>
<rect x="822" y="331" width="80" height="37" fill="#eeeefe"/>
<rect x="822" y="331" width="80" height="1" fill="#7a8aa0"/>
<rect x="822" y="331" width="1" height="37" fill="#7a8aa0"/>
<rect x="822" y="367" width="80" height="1" fill="#b4cce6"/>
<rect x="901" y="331" width="1" height="37" fill="#b4cce6"/>
<rect x="826" y="335" width="72" height="1" fill="#a6a6a6"/>
<rect x="826" y="363" width="72" height="1" fill="#a6a6a6"/>
<rect x="826" y="335" width="1" height="29" fill="#a6a6a6"/>
<rect x="897" y="335" width="1" height="29" fill="#a6a6a6"/>
<rect x="827" y="336" width="70" height="27" fill="url(#lhatch)"/>
<path d="M831 340h4v1h-4z M831 358h4v1h-4z M837 340h4v1h-4z M837 358h4v1h-4z M843 340h4v1h-4z M843 358h4v1h-4z M849 340h4v1h-4z M849 358h4v1h-4z M855 340h4v1h-4z M855 358h4v1h-4z M831 340v4h1v-4z M859 340v4h1v-4z M831 346v4h1v-4z M859 346v4h1v-4z M831 352v4h1v-4z M859 352v4h1v-4z M831 358v1h1v-1z M859 358v1h1v-1z" fill="#888888"/>
<path d="M864 340h4v1h-4z M864 358h4v1h-4z M870 340h4v1h-4z M870 358h4v1h-4z M864 340v4h1v-4z M873 340v4h1v-4z M864 346v4h1v-4z M873 346v4h1v-4z M864 352v4h1v-4z M873 352v4h1v-4z M864 358v1h1v-1z M873 358v1h1v-1z" fill="#888888"/>
<text x="834" y="352" font-size="10" fill="#000000" textLength="23" lengthAdjust="spacingAndGlyphs" font-family="Liberation Sans">Tree</text>
<rect x="911" y="326" width="125" height="47" fill="#eeeeee"/>
<rect x="911" y="326" width="125" height="1" fill="#b4cce6"/>
<rect x="911" y="326" width="1" height="47" fill="#b4cce6"/>
<rect x="911" y="372" width="125" height="1" fill="#7a8aa0"/>
<rect x="1035" y="326" width="1" height="47" fill="#7a8aa0"/>
<rect x="916" y="331" width="115" height="37" fill="#eeeefe"/>
<rect x="916" y="331" width="115" height="1" fill="#7a8aa0"/>
<rect x="916" y="331" width="1" height="37" fill="#7a8aa0"/>
<rect x="916" y="367" width="115" height="1" fill="#b4cce6"/>
<rect x="1030" y="331" width="1" height="37" fill="#b4cce6"/>
<rect x="920" y="335" width="107" height="1" fill="#a6a6a6"/>
<rect x="920" y="363" width="107" height="1" fill="#a6a6a6"/>
<rect x="920" y="335" width="1" height="29" fill="#a6a6a6"/>
<rect x="1026" y="335" width="1" height="29" fill="#a6a6a6"/>
<rect x="921" y="336" width="105" height="27" fill="url(#lhatch)"/>
<path d="M925 340h4v1h-4z M925 358h4v1h-4z M931 340h4v1h-4z M931 358h4v1h-4z M937 340h4v1h-4z M937 358h4v1h-4z M943 340h4v1h-4z M943 358h4v1h-4z M949 340h4v1h-4z M949 358h4v1h-4z M955 340h4v1h-4z M955 358h4v1h-4z M961 340h4v1h-4z M961 358h4v1h-4z M967 340h4v1h-4z M967 358h4v1h-4z M973 340h4v1h-4z M973 358h4v1h-4z M979 340h4v1h-4z M979 358h4v1h-4z M985 340h2v1h-2z M985 358h2v1h-2z M925 340v4h1v-4z M986 340v4h1v-4z M925 346v4h1v-4z M986 346v4h1v-4z M925 352v4h1v-4z M986 352v4h1v-4z M925 358v1h1v-1z M986 358v1h1v-1z" fill="#888888"/>
<path d="M991 340h4v1h-4z M991 358h4v1h-4z M997 340h4v1h-4z M997 358h4v1h-4z M991 340v4h1v-4z M1000 340v4h1v-4z M991 346v4h1v-4z M1000 346v4h1v-4z M991 352v4h1v-4z M1000 352v4h1v-4z M991 358v1h1v-1z M1000 358v1h1v-1z" fill="#888888"/>
<text x="928" y="352" font-size="10" fill="#000000" textLength="55" lengthAdjust="spacingAndGlyphs" font-family="Liberation Sans">Deprecated</text>
<rect x="1142" y="326" width="102" height="47" fill="#eeeeee"/>
<rect x="1142" y="326" width="102" height="1" fill="#b4cce6"/>
<rect x="1142" y="326" width="1" height="47" fill="#b4cce6"/>
<rect x="1142" y="372" width="102" height="1" fill="#7a8aa0"/>
<rect x="1243" y="326" width="1" height="47" fill="#7a8aa0"/>
<rect x="1147" y="331" width="92" height="37" fill="#eeeefe"/>
<rect x="1147" y="331" width="92" height="1" fill="#7a8aa0"/>
<rect x="1147" y="331" width="1" height="37" fill="#7a8aa0"/>
<rect x="1147" y="367" width="92" height="1" fill="#b4cce6"/>
<rect x="1238" y="331" width="1" height="37" fill="#b4cce6"/>
<rect x="1151" y="335" width="84" height="1" fill="#a6a6a6"/>
<rect x="1151" y="363" width="84" height="1" fill="#a6a6a6"/>
<rect x="1151" y="335" width="1" height="29" fill="#a6a6a6"/>
<rect x="1234" y="335" width="1" height="29" fill="#a6a6a6"/>
<rect x="1152" y="336" width="82" height="27" fill="url(#lhatch)"/>
<path d="M1156 340h4v1h-4z M1156 358h4v1h-4z M1162 340h4v1h-4z M1162 358h4v1h-4z M1168 340h4v1h-4z M1168 358h4v1h-4z M1174 340h4v1h-4z M1174 358h4v1h-4z M1180 340h4v1h-4z M1180 358h4v1h-4z M1156 340v4h1v-4z M1184 340v4h1v-4z M1156 346v4h1v-4z M1184 346v4h1v-4z M1156 352v4h1v-4z M1184 352v4h1v-4z M1156 358v1h1v-1z M1184 358v1h1v-1z" fill="#888888"/>
<path d="M1189 340h4v1h-4z M1189 358h4v1h-4z M1195 340h4v1h-4z M1195 358h4v1h-4z M1189 340v4h1v-4z M1198 340v4h1v-4z M1189 346v4h1v-4z M1198 346v4h1v-4z M1189 352v4h1v-4z M1198 352v4h1v-4z M1189 358v1h1v-1z M1198 358v1h1v-1z" fill="#888888"/>
<text x="1159" y="352" font-size="10" fill="#000000" textLength="23" lengthAdjust="spacingAndGlyphs" font-family="Liberation Sans">Help</text>
<rect x="1040" y="326" width="98" height="47" fill="#eeeeee"/>
<rect x="1040" y="326" width="98" height="1" fill="#b4cce6"/>
<rect x="1040" y="326" width="1" height="47" fill="#b4cce6"/>
<rect x="1040" y="372" width="98" height="1" fill="#7a8aa0"/>
<rect x="1137" y="326" width="1" height="47" fill="#7a8aa0"/>
<rect x="1045" y="331" width="88" height="37" fill="#000080"/>
<rect x="1045" y="331" width="88" height="1" fill="#000080"/>
<rect x="1045" y="331" width="1" height="37" fill="#000080"/>
<rect x="1045" y="367" width="88" height="1" fill="#000080"/>
<rect x="1132" y="331" width="1" height="37" fill="#000080"/>
<rect x="1049" y="335" width="80" height="1" fill="#c4c4bc"/>
<rect x="1049" y="363" width="80" height="1" fill="#c4c4bc"/>
<rect x="1049" y="335" width="1" height="29" fill="#c4c4bc"/>
<rect x="1128" y="335" width="1" height="29" fill="#c4c4bc"/>
<rect x="1050" y="336" width="78" height="27" fill="url(#nhatch)"/>
<path d="M1054 340h4v1h-4z M1054 358h4v1h-4z M1060 340h4v1h-4z M1060 358h4v1h-4z M1054 340v4h1v-4z M1063 340v4h1v-4z M1054 346v4h1v-4z M1063 346v4h1v-4z M1054 352v4h1v-4z M1063 352v4h1v-4z M1054 358v1h1v-1z M1063 358v1h1v-1z" fill="#b0b0a0"/>
<path d="M1068 340h4v1h-4z M1068 358h4v1h-4z M1074 340h4v1h-4z M1074 358h4v1h-4z M1080 340h4v1h-4z M1080 358h4v1h-4z M1086 340h4v1h-4z M1086 358h4v1h-4z M1092 340h4v1h-4z M1092 358h4v1h-4z M1098 340h4v1h-4z M1098 358h4v1h-4z M1068 340v4h1v-4z M1101 340v4h1v-4z M1068 346v4h1v-4z M1101 346v4h1v-4z M1068 352v4h1v-4z M1101 352v4h1v-4z M1068 358v1h1v-1z M1101 358v1h1v-1z" fill="#b0b0a0"/>
<path d="M1106 340h4v1h-4z M1106 358h4v1h-4z M1112 340h4v1h-4z M1112 358h4v1h-4z M1106 340v4h1v-4z M1115 340v4h1v-4z M1106 346v4h1v-4z M1115 346v4h1v-4z M1106 352v4h1v-4z M1115 352v4h1v-4z M1106 358v1h1v-1z M1115 358v1h1v-1z" fill="#b0b0a0"/>
<text x="1072" y="352" font-size="10" fill="#ffffff" textLength="25" lengthAdjust="spacingAndGlyphs" font-family="Liberation Sans">Index</text>
<path d="M253 395h4v1h-4z M259 395h4v1h-4z M265 395h4v1h-4z M271 395h4v1h-4z M277 395h4v1h-4z M283 395h4v1h-4z M289 395h4v1h-4z M295 395h4v1h-4z M301 395h4v1h-4z M307 395h4v1h-4z M313 395h4v1h-4z M319 395h4v1h-4z M325 395h4v1h-4z M331 395h4v1h-4z M337 395h4v1h-4z M343 395h4v1h-4z M349 395h4v1h-4z M355 395h4v1h-4z M361 395h4v1h-4z M367 395h4v1h-4z M373 395h4v1h-4z M379 395h4v1h-4z M385 395h4v1h-4z M391 395h4v1h-4z M397 395h4v1h-4z M403 395h4v1h-4z M409 395h4v1h-4z M415 395h4v1h-4z M421 395h4v1h-4z M427 395h4v1h-4z M433 395h4v1h-4z M439 395h4v1h-4z M445 395h4v1h-4z M451 395h4v1h-4z M457 395h4v1h-4z M463 395h4v1h-4z M469 395h4v1h-4z M475 395h4v1h-4z M481 395h4v1h-4z M487 395h4v1h-4z M493 395h4v1h-4z M499 395h4v1h-4z M505 395h4v1h-4z M511 395h4v1h-4z M517 395h4v1h-4z M523 395h4v1h-4z M529 395h4v1h-4z M535 395h4v1h-4z M541 395h4v1h-4z M547 395h4v1h-4z M553 395h4v1h-4z M559 395h4v1h-4z M565 395h4v1h-4z M571 395h4v1h-4z M577 395h4v1h-4z M583 395h4v1h-4z M589 395h4v1h-4z M595 395h4v1h-4z M601 395h4v1h-4z M607 395h4v1h-4z M613 395h4v1h-4z M619 395h4v1h-4z M625 395h4v1h-4z M631 395h4v1h-4z M637 395h4v1h-4z M643 395h4v1h-4z M649 395h4v1h-4z M655 395h4v1h-4z M661 395h4v1h-4z M667 395h4v1h-4z M673 395h4v1h-4z M679 395h4v1h-4z M685 395h4v1h-4z M691 395h4v1h-4z M697 395h4v1h-4z M703 395h4v1h-4z M709 395h4v1h-4z M715 395h4v1h-4z M721 395h4v1h-4z M727 395h4v1h-4z M733 395h4v1h-4z M739 395h4v1h-4z M745 395h4v1h-4z M751 395h4v1h-4z M757 395h4v1h-4z M763 395h4v1h-4z M769 395h4v1h-4z M775 395h4v1h-4z M781 395h4v1h-4z M787 395h4v1h-4z M793 395h4v1h-4z M799 395h4v1h-4z M805 395h4v1h-4z M811 395h4v1h-4z M817 395h4v1h-4z M823 395h4v1h-4z M829 395h4v1h-4z M835 395h4v1h-4z M841 395h4v1h-4z M847 395h4v1h-4z M853 395h4v1h-4z M859 395h4v1h-4z M865 395h4v1h-4z M871 395h4v1h-4z M877 395h4v1h-4z M883 395h4v1h-4z M889 395h4v1h-4z M895 395h4v1h-4z M901 395h4v1h-4z M907 395h4v1h-4z M913 395h4v1h-4z M919 395h4v1h-4z M925 395h4v1h-4z M931 395h4v1h-4z M937 395h4v1h-4z M943 395h4v1h-4z M949 395h4v1h-4z M955 395h4v1h-4z M961 395h4v1h-4z M967 395h4v1h-4z M973 395h4v1h-4z M979 395h4v1h-4z M985 395h4v1h-4z M991 395h4v1h-4z M997 395h4v1h-4z M1003 395h4v1h-4z M1009 395h4v1h-4z M1015 395h4v1h-4z M1021 395h4v1h-4z M1027 395h4v1h-4z M1033 395h4v1h-4z M1039 395h4v1h-4z M1045 395h4v1h-4z M1051 395h4v1h-4z M1057 395h4v1h-4z M1063 395h4v1h-4z M1069 395h4v1h-4z M1075 395h4v1h-4z M1081 395h4v1h-4z M1087 395h4v1h-4z M1093 395h4v1h-4z M1099 395h4v1h-4z M1105 395h4v1h-4z M1111 395h4v1h-4z M1117 395h4v1h-4z M1123 395h4v1h-4z M1129 395h4v1h-4z M1135 395h4v1h-4z M1141 395h4v1h-4z M1147 395h4v1h-4z M1153 395h4v1h-4z M1159 395h4v1h-4z M1165 395h4v1h-4z M1171 395h4v1h-4z M1177 395h4v1h-4z M1183 395h4v1h-4z M1189 395h4v1h-4z M1195 395h4v1h-4z M1201 395h4v1h-4z M1207 395h4v1h-4z M1213 395h4v1h-4z M1219 395h4v1h-4z M1225 395h4v1h-4z M1231 395h4v1h-4z M1237 395h4v1h-4z M1243 395h4v1h-4z M1249 395h4v1h-4z M1255 395h4v1h-4z M1261 395h4v1h-4z" fill="#ffffff"/>
<rect x="256" y="399" width="1007" height="1" fill="#a6a6a6"/>
<rect x="256" y="483" width="1007" height="1" fill="#a6a6a6"/>
<rect x="256" y="399" width="1" height="85" fill="#a6a6a6"/>
<rect x="1262" y="399" width="1" height="85" fill="#a6a6a6"/>
<rect x="257" y="400" width="1005" height="83" fill="url(#hatch)"/>
<rect x="261" y="404" width="491" height="75" fill="#eeeeee"/>
<rect x="261" y="404" width="491" height="1" fill="#b4cce6"/>
<rect x="261" y="404" width="1" height="75" fill="#b4cce6"/>
<rect x="261" y="478" width="491" height="1" fill="#7a8aa0"/>
<rect x="751" y="404" width="1" height="75" fill="#7a8aa0"/>
<rect x="266" y="409" width="481" height="65" fill="#eeeeee"/>
<rect x="266" y="409" width="481" height="1" fill="#7a8aa0"/>
<rect x="266" y="409" width="1" height="65" fill="#7a8aa0"/>
<rect x="266" y="473" width="481" height="1" fill="#b4cce6"/>
<rect x="746" y="409" width="1" height="65" fill="#b4cce6"/>
<rect x="270" y="413" width="473" height="1" fill="#a6a6a6"/>
<rect x="270" y="469" width="473" height="1" fill="#a6a6a6"/>
<rect x="270" y="413" width="1" height="57" fill="#a6a6a6"/>
<rect x="742" y="413" width="1" height="57" fill="#a6a6a6"/>
<rect x="271" y="414" width="471" height="55" fill="url(#hatch)"/>
<rect x="275" y="418" width="176" height="47" fill="#eeeeee"/>
<rect x="275" y="418" width="176" height="1" fill="#b4cce6"/>
<rect x="275" y="418" width="1" height="47" fill="#b4cce6"/>
<rect x="275" y="464" width="176" height="1" fill="#7a8aa0"/>
<rect x="450" y="418" width="1" height="47" fill="#7a8aa0"/>
<rect x="280" y="423" width="166" height="37" fill="#eeeeee"/>
<rect x="280" y="423" width="166" height="1" fill="#7a8aa0"/>
<rect x="280" y="423" width="1" height="37" fill="#7a8aa0"/>
<rect x="280" y="459" width="166" height="1" fill="#b4cce6"/>
<rect x="445" y="423" width="1" height="37" fill="#b4cce6"/>
<rect x="284" y="427" width="158" height="1" fill="#a6a6a6"/>
<rect x="284" y="455" width="158" height="1" fill="#a6a6a6"/>
<rect x="284" y="427" width="1" height="29" fill="#a6a6a6"/>
<rect x="441" y="427" width="1" height="29" fill="#a6a6a6"/>
<rect x="285" y="428" width="156" height="27" fill="url(#hatch)"/>
<path d="M289 432h4v1h-4z M289 450h4v1h-4z M295 432h4v1h-4z M295 450h4v1h-4z M301 432h4v1h-4z M301 450h4v1h-4z M307 432h4v1h-4z M307 450h4v1h-4z M313 432h4v1h-4z M313 450h4v1h-4z M319 432h4v1h-4z M319 450h4v1h-4z M325 432h4v1h-4z M325 450h4v1h-4z M331 432h4v1h-4z M331 450h4v1h-4z M337 432h4v1h-4z M337 450h4v1h-4z M343 432h3v1h-3z M343 450h3v1h-3z M289 432v4h1v-4z M345 432v4h1v-4z M289 438v4h1v-4z M345 438v4h1v-4z M289 444v4h1v-4z M345 444v4h1v-4z M289 450v1h1v-1z M345 450v1h1v-1z" fill="#888888"/>
<path d="M351 432h4v1h-4z M351 450h4v1h-4z M357 432h4v1h-4z M357 450h4v1h-4z M351 432v4h1v-4z M362 432v4h1v-4z M351 438v4h1v-4z M362 438v4h1v-4z M351 444v4h1v-4z M362 444v4h1v-4z M351 450v1h1v-1z M362 450v1h1v-1z" fill="#888888"/>
<path d="M368 432h4v1h-4z M368 450h4v1h-4z M374 432h4v1h-4z M374 450h4v1h-4z M380 432h4v1h-4z M380 450h4v1h-4z M386 432h4v1h-4z M386 450h4v1h-4z M392 432h4v1h-4z M392 450h4v1h-4z M398 432h4v1h-4z M398 450h4v1h-4z M404 432h4v1h-4z M404 450h4v1h-4z M410 432h4v1h-4z M410 450h4v1h-4z M416 432h4v1h-4z M416 450h4v1h-4z M422 432h4v1h-4z M422 450h4v1h-4z M368 432v4h1v-4z M425 432v4h1v-4z M368 438v4h1v-4z M425 438v4h1v-4z M368 444v4h1v-4z M425 444v4h1v-4z M368 450v1h1v-1z M425 450v1h1v-1z" fill="#888888"/>
<text x="293" y="440" font-size="7.5" fill="#000000" font-weight="bold" textLength="50" lengthAdjust="spacingAndGlyphs" font-family="Liberation Sans">PREV LETTER</text>
<text x="372" y="440" font-size="7.5" fill="#000000" font-weight="bold" textLength="51" lengthAdjust="spacingAndGlyphs" font-family="Liberation Sans">NEXT LETTER</text>
<path d="M456 418h4v1h-4z M456 436h4v1h-4z M462 418h4v1h-4z M462 436h4v1h-4z M468 418h4v1h-4z M468 436h4v1h-4z M456 418v4h1v-4z M473 418v4h1v-4z M456 424v4h1v-4z M473 424v4h1v-4z M456 430v4h1v-4z M473 430v4h1v-4z M456 436v1h1v-1z M473 436v1h1v-1z" fill="#888888"/>
<rect x="479" y="418" width="153" height="47" fill="#eeeeee"/>
<rect x="479" y="418" width="153" height="1" fill="#b4cce6"/>
<rect x="479" y="418" width="1" height="47" fill="#b4cce6"/>
<rect x="479" y="464" width="153" height="1" fill="#7a8aa0"/>
<rect x="631" y="418" width="1" height="47" fill="#7a8aa0"/>
<rect x="484" y="423" width="143" height="37" fill="#eeeeee"/>
<rect x="484" y="423" width="143" height="1" fill="#7a8aa0"/>
<rect x="484" y="423" width="1" height="37" fill="#7a8aa0"/>
<rect x="484" y="459" width="143" height="1" fill="#b4cce6"/>
<rect x="626" y="423" width="1" height="37" fill="#b4cce6"/>
<rect x="488" y="427" width="135" height="1" fill="#a6a6a6"/>
<rect x="488" y="455" width="135" height="1" fill="#a6a6a6"/>
<rect x="488" y="427" width="1" height="29" fill="#a6a6a6"/>
<rect x="622" y="427" width="1" height="29" fill="#a6a6a6"/>
<rect x="489" y="428" width="133" height="27" fill="url(#hatch)"/>
<path d="M493 432h4v1h-4z M493 450h4v1h-4z M499 432h4v1h-4z M499 450h4v1h-4z M505 432h4v1h-4z M505 450h4v1h-4z M511 432h4v1h-4z M511 450h4v1h-4z M517 432h4v1h-4z M517 450h4v1h-4z M523 432h4v1h-4z M523 450h4v1h-4z M529 432h4v1h-4z M529 450h4v1h-4z M535 432h2v1h-2z M535 450h2v1h-2z M493 432v4h1v-4z M536 432v4h1v-4z M493 438v4h1v-4z M536 438v4h1v-4z M493 444v4h1v-4z M536 444v4h1v-4z M493 450v1h1v-1z M536 450v1h1v-1z" fill="#888888"/>
<path d="M542 432h4v1h-4z M542 450h4v1h-4z M548 432h4v1h-4z M548 450h4v1h-4z M554 432h1v1h-1z M554 450h1v1h-1z M542 432v4h1v-4z M554 432v4h1v-4z M542 438v4h1v-4z M554 438v4h1v-4z M542 444v4h1v-4z M554 444v4h1v-4z M542 450v1h1v-1z M554 450v1h1v-1z" fill="#888888"/>
<path d="M559 432h4v1h-4z M559 450h4v1h-4z M565 432h4v1h-4z M565 450h4v1h-4z M571 432h4v1h-4z M571 450h4v1h-4z M577 432h4v1h-4z M577 450h4v1h-4z M583 432h4v1h-4z M583 450h4v1h-4z M589 432h4v1h-4z M589 450h4v1h-4z M595 432h4v1h-4z M595 450h4v1h-4z M601 432h4v1h-4z M601 450h4v1h-4z M607 432h2v1h-2z M607 450h2v1h-2z M559 432v4h1v-4z M608 432v4h1v-4z M559 438v4h1v-4z M608 438v4h1v-4z M559 444v4h1v-4z M608 444v4h1v-4z M559 450v1h1v-1z M608 450v1h1v-1z" fill="#888888"/>
<text x="496" y="440" font-size="7.5" fill="#000000" font-weight="bold" textLength="37" lengthAdjust="spacingAndGlyphs" font-family="Liberation Sans">All Classes</text>
<text x="562" y="440" font-size="7.5" fill="#000000" font-weight="bold" textLength="43" lengthAdjust="spacingAndGlyphs" font-family="Liberation Sans">All Packages</text>
<rect x="756" y="404" width="502" height="75" fill="#eeeeee"/>
<rect x="756" y="404" width="502" height="1" fill="#b4cce6"/>
<rect x="756" y="404" width="1" height="75" fill="#b4cce6"/>
<rect x="756" y="478" width="502" height="1" fill="#7a8aa0"/>
<rect x="1257" y="404" width="1" height="75" fill="#7a8aa0"/>
<rect x="761" y="409" width="492" height="65" fill="#eeeeee"/>
<rect x="761" y="409" width="492" height="1" fill="#7a8aa0"/>
<rect x="761" y="409" width="1" height="65" fill="#7a8aa0"/>
<rect x="761" y="473" width="492" height="1" fill="#b4cce6"/>
<rect x="1252" y="409" width="1" height="65" fill="#b4cce6"/>
<rect x="765" y="413" width="484" height="1" fill="#a6a6a6"/>
<rect x="765" y="469" width="484" height="1" fill="#a6a6a6"/>
<rect x="765" y="413" width="1" height="57" fill="#a6a6a6"/>
<rect x="1248" y="413" width="1" height="57" fill="#a6a6a6"/>
<rect x="766" y="414" width="482" height="55" fill="url(#hatch)"/>
<rect x="770" y="418" width="147" height="47" fill="#eeeeee"/>
<rect x="770" y="418" width="147" height="1" fill="#b4cce6"/>
<rect x="770" y="418" width="1" height="47" fill="#b4cce6"/>
<rect x="770" y="464" width="147" height="1" fill="#7a8aa0"/>
<rect x="916" y="418" width="1" height="47" fill="#7a8aa0"/>
<rect x="775" y="423" width="137" height="37" fill="#eeeeee"/>
<rect x="775" y="423" width="137" height="1" fill="#7a8aa0"/>
<rect x="775" y="423" width="1" height="37" fill="#7a8aa0"/>
<rect x="775" y="459" width="137" height="1" fill="#b4cce6"/>
<rect x="911" y="423" width="1" height="37" fill="#b4cce6"/>
<rect x="779" y="427" width="129" height="1" fill="#a6a6a6"/>
<rect x="779" y="455" width="129" height="1" fill="#a6a6a6"/>
<rect x="779" y="427" width="1" height="29" fill="#a6a6a6"/>
<rect x="907" y="427" width="1" height="29" fill="#a6a6a6"/>
<rect x="780" y="428" width="127" height="27" fill="url(#hatch)"/>
<path d="M784 432h4v1h-4z M784 450h4v1h-4z M790 432h4v1h-4z M790 450h4v1h-4z M796 432h4v1h-4z M796 450h4v1h-4z M802 432h4v1h-4z M802 450h4v1h-4z M808 432h4v1h-4z M808 450h4v1h-4z M814 432h4v1h-4z M814 450h4v1h-4z M784 432v4h1v-4z M818 432v4h1v-4z M784 438v4h1v-4z M818 438v4h1v-4z M784 444v4h1v-4z M818 444v4h1v-4z M784 450v1h1v-1z M818 450v1h1v-1z" fill="#888888"/>
<path d="M824 432h4v1h-4z M824 450h4v1h-4z M830 432h4v1h-4z M830 450h4v1h-4z M836 432h2v1h-2z M836 450h2v1h-2z M824 432v4h1v-4z M837 432v4h1v-4z M824 438v4h1v-4z M837 438v4h1v-4z M824 444v4h1v-4z M837 444v4h1v-4z M824 450v1h1v-1z M837 450v1h1v-1z" fill="#888888"/>
<path d="M843 432h4v1h-4z M843 450h4v1h-4z M849 432h4v1h-4z M849 450h4v1h-4z M855 432h4v1h-4z M855 450h4v1h-4z M861 432h4v1h-4z M861 450h4v1h-4z M867 432h4v1h-4z M867 450h4v1h-4z M873 432h4v1h-4z M873 450h4v1h-4z M879 432h4v1h-4z M879 450h4v1h-4z M885 432h4v1h-4z M885 450h4v1h-4z M843 432v4h1v-4z M889 432v4h1v-4z M843 438v4h1v-4z M889 438v4h1v-4z M843 444v4h1v-4z M889 444v4h1v-4z M843 450v1h1v-1z M889 450v1h1v-1z" fill="#888888"/>
<text x="788" y="440" font-size="7.5" fill="#000000" font-weight="bold" textLength="28" lengthAdjust="spacingAndGlyphs" font-family="Liberation Sans">FRAMES</text>
<text x="847" y="440" font-size="7.5" fill="#000000" font-weight="bold" textLength="39" lengthAdjust="spacingAndGlyphs" font-family="Liberation Sans">NO FRAMES</text>
<path d="M253 487h4v1h-4z M259 487h4v1h-4z M265 487h4v1h-4z M271 487h4v1h-4z M277 487h4v1h-4z M283 487h4v1h-4z M289 487h4v1h-4z M295 487h4v1h-4z M301 487h4v1h-4z M307 487h4v1h-4z M313 487h4v1h-4z M319 487h4v1h-4z M325 487h4v1h-4z M331 487h4v1h-4z M337 487h4v1h-4z M343 487h4v1h-4z M349 487h4v1h-4z M355 487h4v1h-4z M361 487h4v1h-4z M367 487h4v1h-4z M373 487h4v1h-4z M379 487h4v1h-4z M385 487h4v1h-4z M391 487h4v1h-4z M397 487h4v1h-4z M403 487h4v1h-4z M409 487h4v1h-4z M415 487h4v1h-4z M421 487h4v1h-4z M427 487h4v1h-4z M433 487h4v1h-4z M439 487h4v1h-4z M445 487h4v1h-4z M451 487h4v1h-4z M457 487h4v1h-4z M463 487h4v1h-4z M469 487h4v1h-4z M475 487h4v1h-4z M481 487h4v1h-4z M487 487h4v1h-4z M493 487h4v1h-4z M499 487h4v1h-4z M505 487h4v1h-4z M511 487h4v1h-4z M517 487h4v1h-4z M523 487h4v1h-4z M529 487h4v1h-4z M535 487h4v1h-4z M541 487h4v1h-4z M547 487h4v1h-4z M553 487h4v1h-4z M559 487h4v1h-4z M565 487h4v1h-4z M571 487h4v1h-4z M577 487h4v1h-4z M583 487h4v1h-4z M589 487h4v1h-4z M595 487h4v1h-4z M601 487h4v1h-4z M607 487h4v1h-4z M613 487h4v1h-4z M619 487h4v1h-4z M625 487h4v1h-4z M631 487h4v1h-4z M637 487h4v1h-4z M643 487h4v1h-4z M649 487h4v1h-4z M655 487h4v1h-4z M661 487h4v1h-4z M667 487h4v1h-4z M673 487h4v1h-4z M679 487h4v1h-4z M685 487h4v1h-4z M691 487h4v1h-4z M697 487h4v1h-4z M703 487h4v1h-4z M709 487h4v1h-4z M715 487h4v1h-4z M721 487h4v1h-4z M727 487h4v1h-4z M733 487h4v1h-4z M739 487h4v1h-4z M745 487h4v1h-4z M751 487h4v1h-4z M757 487h4v1h-4z M763 487h4v1h-4z M769 487h4v1h-4z M775 487h4v1h-4z M781 487h4v1h-4z M787 487h4v1h-4z M793 487h4v1h-4z M799 487h4v1h-4z M805 487h4v1h-4z M811 487h4v1h-4z M817 487h4v1h-4z M823 487h4v1h-4z M829 487h4v1h-4z M835 487h4v1h-4z M841 487h4v1h-4z M847 487h4v1h-4z M853 487h4v1h-4z M859 487h4v1h-4z M865 487h4v1h-4z M871 487h4v1h-4z M877 487h4v1h-4z M883 487h4v1h-4z M889 487h4v1h-4z M895 487h4v1h-4z M901 487h4v1h-4z M907 487h4v1h-4z M913 487h4v1h-4z M919 487h4v1h-4z M925 487h4v1h-4z M931 487h4v1h-4z M937 487h4v1h-4z M943 487h4v1h-4z M949 487h4v1h-4z M955 487h4v1h-4z M961 487h4v1h-4z M967 487h4v1h-4z M973 487h4v1h-4z M979 487h4v1h-4z M985 487h4v1h-4z M991 487h4v1h-4z M997 487h4v1h-4z M1003 487h4v1h-4z M1009 487h4v1h-4z M1015 487h4v1h-4z M1021 487h4v1h-4z M1027 487h4v1h-4z M1033 487h4v1h-4z M1039 487h4v1h-4z M1045 487h4v1h-4z M1051 487h4v1h-4z M1057 487h4v1h-4z M1063 487h4v1h-4z M1069 487h4v1h-4z M1075 487h4v1h-4z M1081 487h4v1h-4z M1087 487h4v1h-4z M1093 487h4v1h-4z M1099 487h4v1h-4z M1105 487h4v1h-4z M1111 487h4v1h-4z M1117 487h4v1h-4z M1123 487h4v1h-4z M1129 487h4v1h-4z M1135 487h4v1h-4z M1141 487h4v1h-4z M1147 487h4v1h-4z M1153 487h4v1h-4z M1159 487h4v1h-4z M1165 487h4v1h-4z M1171 487h4v1h-4z M1177 487h4v1h-4z M1183 487h4v1h-4z M1189 487h4v1h-4z M1195 487h4v1h-4z M1201 487h4v1h-4z M1207 487h4v1h-4z M1213 487h4v1h-4z M1219 487h4v1h-4z M1225 487h4v1h-4z M1231 487h4v1h-4z M1237 487h4v1h-4z M1243 487h4v1h-4z M1249 487h4v1h-4z M1255 487h4v1h-4z M1261 487h4v1h-4z" fill="#ffffff"/>
<rect x="256" y="491" width="1007" height="1" fill="#a6a6a6"/>
<rect x="256" y="520" width="1007" height="1" fill="#a6a6a6"/>
<rect x="256" y="491" width="1" height="30" fill="#a6a6a6"/>
<rect x="1262" y="491" width="1" height="30" fill="#a6a6a6"/>
<rect x="257" y="492" width="1005" height="28" fill="url(#hatch)"/>
<path d="M261 496h4v1h-4z M261 515h4v1h-4z M267 496h4v1h-4z M267 515h4v1h-4z M273 496h4v1h-4z M273 515h4v1h-4z M279 496h4v1h-4z M279 515h4v1h-4z M285 496h4v1h-4z M285 515h4v1h-4z M291 496h4v1h-4z M291 515h4v1h-4z M297 496h4v1h-4z M297 515h4v1h-4z M303 496h4v1h-4z M303 515h4v1h-4z M309 496h4v1h-4z M309 515h4v1h-4z M315 496h4v1h-4z M315 515h4v1h-4z M321 496h4v1h-4z M321 515h4v1h-4z M327 496h4v1h-4z M327 515h4v1h-4z M333 496h4v1h-4z M333 515h4v1h-4z M339 496h4v1h-4z M339 515h4v1h-4z M345 496h4v1h-4z M345 515h4v1h-4z M351 496h4v1h-4z M351 515h4v1h-4z M357 496h4v1h-4z M357 515h4v1h-4z M363 496h4v1h-4z M363 515h4v1h-4z M369 496h4v1h-4z M369 515h4v1h-4z M375 496h4v1h-4z M375 515h4v1h-4z M381 496h4v1h-4z M381 515h4v1h-4z M387 496h4v1h-4z M387 515h4v1h-4z M393 496h4v1h-4z M393 515h4v1h-4z M399 496h4v1h-4z M399 515h4v1h-4z M405 496h4v1h-4z M405 515h4v1h-4z M411 496h4v1h-4z M411 515h4v1h-4z M417 496h4v1h-4z M417 515h4v1h-4z M423 496h4v1h-4z M423 515h4v1h-4z M429 496h4v1h-4z M429 515h4v1h-4z M435 496h4v1h-4z M435 515h4v1h-4z M441 496h4v1h-4z M441 515h4v1h-4z M447 496h4v1h-4z M447 515h4v1h-4z M453 496h4v1h-4z M453 515h4v1h-4z M459 496h4v1h-4z M459 515h4v1h-4z M465 496h4v1h-4z M465 515h4v1h-4z M471 496h4v1h-4z M471 515h4v1h-4z M477 496h4v1h-4z M477 515h4v1h-4z M483 496h4v1h-4z M483 515h4v1h-4z M489 496h4v1h-4z M489 515h4v1h-4z M495 496h4v1h-4z M495 515h4v1h-4z M501 496h4v1h-4z M501 515h4v1h-4z M507 496h4v1h-4z M507 515h4v1h-4z M513 496h4v1h-4z M513 515h4v1h-4z M519 496h4v1h-4z M519 515h4v1h-4z M525 496h4v1h-4z M525 515h4v1h-4z M531 496h4v1h-4z M531 515h4v1h-4z M537 496h4v1h-4z M537 515h4v1h-4z M543 496h4v1h-4z M543 515h4v1h-4z M549 496h4v1h-4z M549 515h4v1h-4z M555 496h4v1h-4z M555 515h4v1h-4z M561 496h4v1h-4z M561 515h4v1h-4z M567 496h4v1h-4z M567 515h4v1h-4z M573 496h4v1h-4z M573 515h4v1h-4z M579 496h4v1h-4z M579 515h4v1h-4z M585 496h4v1h-4z M585 515h4v1h-4z M591 496h4v1h-4z M591 515h4v1h-4z M597 496h4v1h-4z M597 515h4v1h-4z M603 496h4v1h-4z M603 515h4v1h-4z M609 496h4v1h-4z M609 515h4v1h-4z M615 496h4v1h-4z M615 515h4v1h-4z M621 496h4v1h-4z M621 515h4v1h-4z M627 496h4v1h-4z M627 515h4v1h-4z M633 496h4v1h-4z M633 515h4v1h-4z M639 496h4v1h-4z M639 515h4v1h-4z M645 496h4v1h-4z M645 515h4v1h-4z M651 496h4v1h-4z M651 515h4v1h-4z M657 496h4v1h-4z M657 515h4v1h-4z M663 496h4v1h-4z M663 515h4v1h-4z M669 496h4v1h-4z M669 515h4v1h-4z M675 496h4v1h-4z M675 515h4v1h-4z M681 496h4v1h-4z M681 515h4v1h-4z M687 496h4v1h-4z M687 515h4v1h-4z M693 496h4v1h-4z M693 515h4v1h-4z M699 496h4v1h-4z M699 515h4v1h-4z M705 496h4v1h-4z M705 515h4v1h-4z M711 496h4v1h-4z M711 515h4v1h-4z M717 496h4v1h-4z M717 515h4v1h-4z M723 496h4v1h-4z M723 515h4v1h-4z M729 496h4v1h-4z M729 515h4v1h-4z M735 496h4v1h-4z M735 515h4v1h-4z M741 496h4v1h-4z M741 515h4v1h-4z M747 496h4v1h-4z M747 515h4v1h-4z M753 496h4v1h-4z M753 515h4v1h-4z M759 496h4v1h-4z M759 515h4v1h-4z M765 496h4v1h-4z M765 515h4v1h-4z M771 496h4v1h-4z M771 515h4v1h-4z M777 496h4v1h-4z M777 515h4v1h-4z M783 496h4v1h-4z M783 515h4v1h-4z M789 496h4v1h-4z M789 515h4v1h-4z M795 496h4v1h-4z M795 515h4v1h-4z M801 496h4v1h-4z M801 515h4v1h-4z M807 496h4v1h-4z M807 515h4v1h-4z M813 496h4v1h-4z M813 515h4v1h-4z M819 496h4v1h-4z M819 515h4v1h-4z M825 496h4v1h-4z M825 515h4v1h-4z M831 496h4v1h-4z M831 515h4v1h-4z M837 496h4v1h-4z M837 515h4v1h-4z M843 496h4v1h-4z M843 515h4v1h-4z M849 496h4v1h-4z M849 515h4v1h-4z M855 496h4v1h-4z M855 515h4v1h-4z M861 496h4v1h-4z M861 515h4v1h-4z M867 496h4v1h-4z M867 515h4v1h-4z M873 496h4v1h-4z M873 515h4v1h-4z M879 496h4v1h-4z M879 515h4v1h-4z M885 496h4v1h-4z M885 515h4v1h-4z M891 496h4v1h-4z M891 515h4v1h-4z M897 496h4v1h-4z M897 515h4v1h-4z M903 496h4v1h-4z M903 515h4v1h-4z M909 496h4v1h-4z M909 515h4v1h-4z M915 496h4v1h-4z M915 515h4v1h-4z M921 496h4v1h-4z M921 515h4v1h-4z M927 496h4v1h-4z M927 515h4v1h-4z M933 496h4v1h-4z M933 515h4v1h-4z M939 496h4v1h-4z M939 515h4v1h-4z M945 496h4v1h-4z M945 515h4v1h-4z M951 496h4v1h-4z M951 515h4v1h-4z M957 496h4v1h-4z M957 515h4v1h-4z M963 496h4v1h-4z M963 515h4v1h-4z M969 496h4v1h-4z M969 515h4v1h-4z M975 496h4v1h-4z M975 515h4v1h-4z M981 496h4v1h-4z M981 515h4v1h-4z M987 496h4v1h-4z M987 515h4v1h-4z M993 496h4v1h-4z M993 515h4v1h-4z M999 496h4v1h-4z M999 515h4v1h-4z M1005 496h4v1h-4z M1005 515h4v1h-4z M1011 496h4v1h-4z M1011 515h4v1h-4z M1017 496h4v1h-4z M1017 515h4v1h-4z M1023 496h4v1h-4z M1023 515h4v1h-4z M1029 496h4v1h-4z M1029 515h4v1h-4z M1035 496h4v1h-4z M1035 515h4v1h-4z M1041 496h4v1h-4z M1041 515h4v1h-4z M1047 496h4v1h-4z M1047 515h4v1h-4z M1053 496h4v1h-4z M1053 515h4v1h-4z M1059 496h4v1h-4z M1059 515h4v1h-4z M1065 496h4v1h-4z M1065 515h4v1h-4z M1071 496h4v1h-4z M1071 515h4v1h-4z M1077 496h4v1h-4z M1077 515h4v1h-4z M1083 496h4v1h-4z M1083 515h4v1h-4z M1089 496h4v1h-4z M1089 515h4v1h-4z M1095 496h4v1h-4z M1095 515h4v1h-4z M1101 496h4v1h-4z M1101 515h4v1h-4z M1107 496h4v1h-4z M1107 515h4v1h-4z M1113 496h4v1h-4z M1113 515h4v1h-4z M1119 496h4v1h-4z M1119 515h4v1h-4z M1125 496h4v1h-4z M1125 515h4v1h-4z M1131 496h4v1h-4z M1131 515h4v1h-4z M1137 496h4v1h-4z M1137 515h4v1h-4z M1143 496h4v1h-4z M1143 515h4v1h-4z M1149 496h4v1h-4z M1149 515h4v1h-4z M1155 496h4v1h-4z M1155 515h4v1h-4z M1161 496h4v1h-4z M1161 515h4v1h-4z M1167 496h4v1h-4z M1167 515h4v1h-4z M1173 496h4v1h-4z M1173 515h4v1h-4z M1179 496h4v1h-4z M1179 515h4v1h-4z M1185 496h4v1h-4z M1185 515h4v1h-4z M1191 496h4v1h-4z M1191 515h4v1h-4z M1197 496h4v1h-4z M1197 515h4v1h-4z M1203 496h4v1h-4z M1203 515h4v1h-4z M1209 496h4v1h-4z M1209 515h4v1h-4z M1215 496h4v1h-4z M1215 515h4v1h-4z M1221 496h4v1h-4z M1221 515h4v1h-4z M1227 496h4v1h-4z M1227 515h4v1h-4z M1233 496h4v1h-4z M1233 515h4v1h-4z M1239 496h4v1h-4z M1239 515h4v1h-4z M1245 496h4v1h-4z M1245 515h4v1h-4z M1251 496h4v1h-4z M1251 515h4v1h-4z M1257 496h1v1h-1z M1257 515h1v1h-1z M261 496v4h1v-4z M1257 496v4h1v-4z M261 502v4h1v-4z M1257 502v4h1v-4z M261 508v4h1v-4z M1257 508v4h1v-4z M261 514v2h1v-2z M1257 514v2h1v-2z" fill="#888888"/>
<text x="265" y="509" font-size="10" fill="#000000" textLength="70" lengthAdjust="spacingAndGlyphs" font-family="Liberation Sans">Call &#x27;Letter Bar&#x27;</text>
<path d="M1276 298h4v1h-4z M1276 529h4v1h-4z M1282 298h4v1h-4z M1282 529h4v1h-4z M1288 298h4v1h-4z M1288 529h4v1h-4z M1294 298h4v1h-4z M1294 529h4v1h-4z M1300 298h4v1h-4z M1300 529h4v1h-4z M1306 298h4v1h-4z M1306 529h4v1h-4z M1312 298h4v1h-4z M1312 529h4v1h-4z M1318 298h4v1h-4z M1318 529h4v1h-4z M1324 298h4v1h-4z M1324 529h4v1h-4z M1330 298h4v1h-4z M1330 529h4v1h-4z M1336 298h4v1h-4z M1336 529h4v1h-4z M1342 298h4v1h-4z M1342 529h4v1h-4z M1348 298h4v1h-4z M1348 529h4v1h-4z M1276 298v4h1v-4z M1351 298v4h1v-4z M1276 304v4h1v-4z M1351 304v4h1v-4z M1276 310v4h1v-4z M1351 310v4h1v-4z M1276 316v4h1v-4z M1351 316v4h1v-4z M1276 322v4h1v-4z M1351 322v4h1v-4z M1276 328v4h1v-4z M1351 328v4h1v-4z M1276 334v4h1v-4z M1351 334v4h1v-4z M1276 340v4h1v-4z M1351 340v4h1v-4z M1276 346v4h1v-4z M1351 346v4h1v-4z M1276 352v4h1v-4z M1351 352v4h1v-4z M1276 358v4h1v-4z M1351 358v4h1v-4z M1276 364v4h1v-4z M1351 364v4h1v-4z M1276 370v4h1v-4z M1351 370v4h1v-4z M1276 376v4h1v-4z M1351 376v4h1v-4z M1276 382v4h1v-4z M1351 382v4h1v-4z M1276 388v4h1v-4z M1351 388v4h1v-4z M1276 394v4h1v-4z M1351 394v4h1v-4z M1276 400v4h1v-4z M1351 400v4h1v-4z M1276 406v4h1v-4z M1351 406v4h1v-4z M1276 412v4h1v-4z M1351 412v4h1v-4z M1276 418v4h1v-4z M1351 418v4h1v-4z M1276 424v4h1v-4z M1351 424v4h1v-4z M1276 430v4h1v-4z M1351 430v4h1v-4z M1276 436v4h1v-4z M1351 436v4h1v-4z M1276 442v4h1v-4z M1351 442v4h1v-4z M1276 448v4h1v-4z M1351 448v4h1v-4z M1276 454v4h1v-4z M1351 454v4h1v-4z M1276 460v4h1v-4z M1351 460v4h1v-4z M1276 466v4h1v-4z M1351 466v4h1v-4z M1276 472v4h1v-4z M1351 472v4h1v-4z M1276 478v4h1v-4z M1351 478v4h1v-4z M1276 484v4h1v-4z M1351 484v4h1v-4z M1276 490v4h1v-4z M1351 490v4h1v-4z M1276 496v4h1v-4z M1351 496v4h1v-4z M1276 502v4h1v-4z M1351 502v4h1v-4z M1276 508v4h1v-4z M1351 508v4h1v-4z M1276 514v4h1v-4z M1351 514v4h1v-4z M1276 520v4h1v-4z M1351 520v4h1v-4z M1276 526v4h1v-4z M1351 526v4h1v-4z" fill="#888888"/>
<clipPath id="gp"><rect x="1277" y="299" width="72" height="20"/></clipPath>
<g clip-path="url(#gp)">
<text x="1279" y="311" font-size="10" fill="#000000" font-style="italic" textLength="76" lengthAdjust="spacingAndGlyphs" font-family="Liberation Sans">getParam(&quot;$nav</text>
</g>
<rect x="1" y="633" width="1374" height="24" fill="#eeeeee"/>
<rect x="1" y="636" width="818" height="1" fill="#a6a6a6"/>
<rect x="1" y="636" width="1" height="20" fill="#a6a6a6"/>
<rect x="1" y="655" width="818" height="1" fill="#ffffff"/>
<rect x="818" y="636" width="1" height="20" fill="#ffffff"/>
<rect x="2" y="637" width="816" height="1" fill="#ffffff"/>
<rect x="2" y="637" width="1" height="18" fill="#ffffff"/>
<rect x="2" y="654" width="816" height="1" fill="#a6a6a6"/>
<rect x="817" y="637" width="1" height="18" fill="#a6a6a6"/>
<rect x="822" y="636" width="553" height="1" fill="#a6a6a6"/>
<rect x="822" y="636" width="1" height="20" fill="#a6a6a6"/>
<rect x="822" y="655" width="553" height="1" fill="#ffffff"/>
<rect x="1374" y="636" width="1" height="20" fill="#ffffff"/>
<rect x="823" y="637" width="551" height="1" fill="#ffffff"/>
<rect x="823" y="637" width="1" height="18" fill="#ffffff"/>
<rect x="823" y="654" width="551" height="1" fill="#a6a6a6"/>
<rect x="1373" y="637" width="1" height="18" fill="#a6a6a6"/>
<text x="6" y="651" font-size="11.5" fill="#5c48a4" font-weight="bold" textLength="246" lengthAdjust="spacingAndGlyphs" font-family="Liberation Sans">Area Section for &#x27;DocletEnvironment&#x27; -- Index</text>
<path d="M830 640 H838 L840 642 V650 L838 652 H830 L828 650 V642 Z" fill="#d49a28"/>
<path d="M830 640 H838 L839 641 H829 Z" fill="#f0c040"/>
<path d="M829 651 H839 L838 652 H830 Z" fill="#a87010"/>
<path d="M831.5 644.5 C831.5 642 836.5 642 836.5 644.5 C836.5 646 834 646 834 647.5 V648" stroke="#ffffff" stroke-width="1.8" fill="none" shape-rendering="auto"/>
<rect x="833" y="649" width="2" height="2" fill="#ffffff"/>
<text x="846" y="651" font-size="11.5" fill="#5c48a4" font-weight="bold" textLength="219" lengthAdjust="spacingAndGlyphs" font-family="Liberation Sans">hasParamValue(&quot;$navbarType&quot;, &quot;index&quot;)</text>
</svg>
</body></html>
